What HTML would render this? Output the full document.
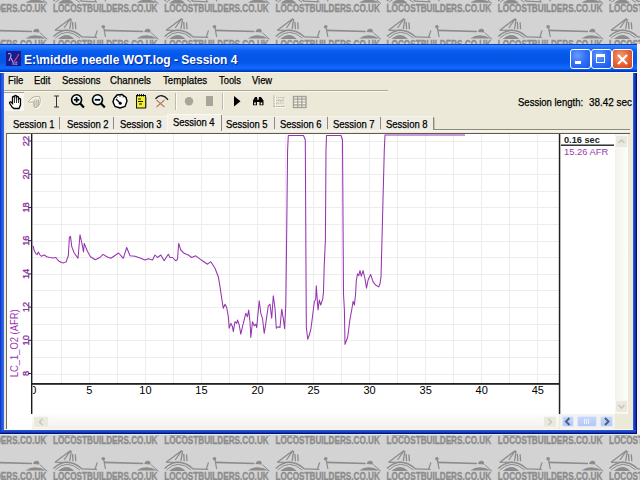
<!DOCTYPE html><html><head><meta charset="utf-8"><style>html,body{margin:0;padding:0;width:640px;height:480px;overflow:hidden;background:#d3d3d3}.a{position:absolute}</style></head><body><svg width="640" height="480" style="position:absolute;left:0;top:0"><rect width="640" height="480" fill="#d3d3d3"/><g transform="translate(-58.20,-31.20)"><text x="0" y="7.9" textLength="104.5" lengthAdjust="spacingAndGlyphs" font-family='"Liberation Sans"' font-weight="bold" font-size="10.8" fill="#8c8c8c" stroke="#8c8c8c" stroke-width="0.35">LOCOSTBUILDERS.CO.UK</text><path d="M2 25.9 L17.6 14.1 L11 23.6 M18.3 14.6 L16.7 24.8 M19.5 17.5 L20 24.8 M22.3 18 L22.8 24.8" fill="none" stroke="#8c8c8c" stroke-width="1.3"/><path d="M2 25.9 L15 25.9" fill="none" stroke="#8c8c8c" stroke-width="1.2"/><path d="M0.4 32.1 Q13.9 19.7 28.5 32.1" fill="none" stroke="#8c8c8c" stroke-width="1.4"/><path d="M2.2 33.6 Q13.9 22.2 26.8 33.6" fill="none" stroke="#8c8c8c" stroke-width="1.0"/><path d="M4.9 34.6 Q13.9 26.5 21.2 34.6 Z" fill="#8c8c8c"/><path d="M28 32.4 L44 33" fill="none" stroke="#8c8c8c" stroke-width="1.2"/><path d="M42.1 32.6 L44.3 26 M50.8 23.8 L52.5 32.6" fill="none" stroke="#8c8c8c" stroke-width="1.2"/><ellipse cx="50.3" cy="22.3" rx="1.8" ry="1.8" fill="#8c8c8c"/><path d="M51 26 L90.2 27.1" fill="none" stroke="#8c8c8c" stroke-width="1.6"/><path d="M91.3 27.5 Q92 24.2 95.5 24.4 Q98 25 97.4 28.2 Z" fill="#8c8c8c"/><path d="M83.7 34 Q92.4 27.5 104.5 34 Z" fill="#8c8c8c"/><path d="M97.9 28.2 L105.5 34.8" fill="none" stroke="#8c8c8c" stroke-width="1.0"/></g><g transform="translate(53.00,-31.20)"><text x="0" y="7.9" textLength="104.5" lengthAdjust="spacingAndGlyphs" font-family='"Liberation Sans"' font-weight="bold" font-size="10.8" fill="#8c8c8c" stroke="#8c8c8c" stroke-width="0.35">LOCOSTBUILDERS.CO.UK</text><path d="M2 25.9 L17.6 14.1 L11 23.6 M18.3 14.6 L16.7 24.8 M19.5 17.5 L20 24.8 M22.3 18 L22.8 24.8" fill="none" stroke="#8c8c8c" stroke-width="1.3"/><path d="M2 25.9 L15 25.9" fill="none" stroke="#8c8c8c" stroke-width="1.2"/><path d="M0.4 32.1 Q13.9 19.7 28.5 32.1" fill="none" stroke="#8c8c8c" stroke-width="1.4"/><path d="M2.2 33.6 Q13.9 22.2 26.8 33.6" fill="none" stroke="#8c8c8c" stroke-width="1.0"/><path d="M4.9 34.6 Q13.9 26.5 21.2 34.6 Z" fill="#8c8c8c"/><path d="M28 32.4 L44 33" fill="none" stroke="#8c8c8c" stroke-width="1.2"/><path d="M42.1 32.6 L44.3 26 M50.8 23.8 L52.5 32.6" fill="none" stroke="#8c8c8c" stroke-width="1.2"/><ellipse cx="50.3" cy="22.3" rx="1.8" ry="1.8" fill="#8c8c8c"/><path d="M51 26 L90.2 27.1" fill="none" stroke="#8c8c8c" stroke-width="1.6"/><path d="M91.3 27.5 Q92 24.2 95.5 24.4 Q98 25 97.4 28.2 Z" fill="#8c8c8c"/><path d="M83.7 34 Q92.4 27.5 104.5 34 Z" fill="#8c8c8c"/><path d="M97.9 28.2 L105.5 34.8" fill="none" stroke="#8c8c8c" stroke-width="1.0"/></g><g transform="translate(164.20,-31.20)"><text x="0" y="7.9" textLength="104.5" lengthAdjust="spacingAndGlyphs" font-family='"Liberation Sans"' font-weight="bold" font-size="10.8" fill="#8c8c8c" stroke="#8c8c8c" stroke-width="0.35">LOCOSTBUILDERS.CO.UK</text><path d="M2 25.9 L17.6 14.1 L11 23.6 M18.3 14.6 L16.7 24.8 M19.5 17.5 L20 24.8 M22.3 18 L22.8 24.8" fill="none" stroke="#8c8c8c" stroke-width="1.3"/><path d="M2 25.9 L15 25.9" fill="none" stroke="#8c8c8c" stroke-width="1.2"/><path d="M0.4 32.1 Q13.9 19.7 28.5 32.1" fill="none" stroke="#8c8c8c" stroke-width="1.4"/><path d="M2.2 33.6 Q13.9 22.2 26.8 33.6" fill="none" stroke="#8c8c8c" stroke-width="1.0"/><path d="M4.9 34.6 Q13.9 26.5 21.2 34.6 Z" fill="#8c8c8c"/><path d="M28 32.4 L44 33" fill="none" stroke="#8c8c8c" stroke-width="1.2"/><path d="M42.1 32.6 L44.3 26 M50.8 23.8 L52.5 32.6" fill="none" stroke="#8c8c8c" stroke-width="1.2"/><ellipse cx="50.3" cy="22.3" rx="1.8" ry="1.8" fill="#8c8c8c"/><path d="M51 26 L90.2 27.1" fill="none" stroke="#8c8c8c" stroke-width="1.6"/><path d="M91.3 27.5 Q92 24.2 95.5 24.4 Q98 25 97.4 28.2 Z" fill="#8c8c8c"/><path d="M83.7 34 Q92.4 27.5 104.5 34 Z" fill="#8c8c8c"/><path d="M97.9 28.2 L105.5 34.8" fill="none" stroke="#8c8c8c" stroke-width="1.0"/></g><g transform="translate(275.40,-31.20)"><text x="0" y="7.9" textLength="104.5" lengthAdjust="spacingAndGlyphs" font-family='"Liberation Sans"' font-weight="bold" font-size="10.8" fill="#8c8c8c" stroke="#8c8c8c" stroke-width="0.35">LOCOSTBUILDERS.CO.UK</text><path d="M2 25.9 L17.6 14.1 L11 23.6 M18.3 14.6 L16.7 24.8 M19.5 17.5 L20 24.8 M22.3 18 L22.8 24.8" fill="none" stroke="#8c8c8c" stroke-width="1.3"/><path d="M2 25.9 L15 25.9" fill="none" stroke="#8c8c8c" stroke-width="1.2"/><path d="M0.4 32.1 Q13.9 19.7 28.5 32.1" fill="none" stroke="#8c8c8c" stroke-width="1.4"/><path d="M2.2 33.6 Q13.9 22.2 26.8 33.6" fill="none" stroke="#8c8c8c" stroke-width="1.0"/><path d="M4.9 34.6 Q13.9 26.5 21.2 34.6 Z" fill="#8c8c8c"/><path d="M28 32.4 L44 33" fill="none" stroke="#8c8c8c" stroke-width="1.2"/><path d="M42.1 32.6 L44.3 26 M50.8 23.8 L52.5 32.6" fill="none" stroke="#8c8c8c" stroke-width="1.2"/><ellipse cx="50.3" cy="22.3" rx="1.8" ry="1.8" fill="#8c8c8c"/><path d="M51 26 L90.2 27.1" fill="none" stroke="#8c8c8c" stroke-width="1.6"/><path d="M91.3 27.5 Q92 24.2 95.5 24.4 Q98 25 97.4 28.2 Z" fill="#8c8c8c"/><path d="M83.7 34 Q92.4 27.5 104.5 34 Z" fill="#8c8c8c"/><path d="M97.9 28.2 L105.5 34.8" fill="none" stroke="#8c8c8c" stroke-width="1.0"/></g><g transform="translate(386.60,-31.20)"><text x="0" y="7.9" textLength="104.5" lengthAdjust="spacingAndGlyphs" font-family='"Liberation Sans"' font-weight="bold" font-size="10.8" fill="#8c8c8c" stroke="#8c8c8c" stroke-width="0.35">LOCOSTBUILDERS.CO.UK</text><path d="M2 25.9 L17.6 14.1 L11 23.6 M18.3 14.6 L16.7 24.8 M19.5 17.5 L20 24.8 M22.3 18 L22.8 24.8" fill="none" stroke="#8c8c8c" stroke-width="1.3"/><path d="M2 25.9 L15 25.9" fill="none" stroke="#8c8c8c" stroke-width="1.2"/><path d="M0.4 32.1 Q13.9 19.7 28.5 32.1" fill="none" stroke="#8c8c8c" stroke-width="1.4"/><path d="M2.2 33.6 Q13.9 22.2 26.8 33.6" fill="none" stroke="#8c8c8c" stroke-width="1.0"/><path d="M4.9 34.6 Q13.9 26.5 21.2 34.6 Z" fill="#8c8c8c"/><path d="M28 32.4 L44 33" fill="none" stroke="#8c8c8c" stroke-width="1.2"/><path d="M42.1 32.6 L44.3 26 M50.8 23.8 L52.5 32.6" fill="none" stroke="#8c8c8c" stroke-width="1.2"/><ellipse cx="50.3" cy="22.3" rx="1.8" ry="1.8" fill="#8c8c8c"/><path d="M51 26 L90.2 27.1" fill="none" stroke="#8c8c8c" stroke-width="1.6"/><path d="M91.3 27.5 Q92 24.2 95.5 24.4 Q98 25 97.4 28.2 Z" fill="#8c8c8c"/><path d="M83.7 34 Q92.4 27.5 104.5 34 Z" fill="#8c8c8c"/><path d="M97.9 28.2 L105.5 34.8" fill="none" stroke="#8c8c8c" stroke-width="1.0"/></g><g transform="translate(497.80,-31.20)"><text x="0" y="7.9" textLength="104.5" lengthAdjust="spacingAndGlyphs" font-family='"Liberation Sans"' font-weight="bold" font-size="10.8" fill="#8c8c8c" stroke="#8c8c8c" stroke-width="0.35">LOCOSTBUILDERS.CO.UK</text><path d="M2 25.9 L17.6 14.1 L11 23.6 M18.3 14.6 L16.7 24.8 M19.5 17.5 L20 24.8 M22.3 18 L22.8 24.8" fill="none" stroke="#8c8c8c" stroke-width="1.3"/><path d="M2 25.9 L15 25.9" fill="none" stroke="#8c8c8c" stroke-width="1.2"/><path d="M0.4 32.1 Q13.9 19.7 28.5 32.1" fill="none" stroke="#8c8c8c" stroke-width="1.4"/><path d="M2.2 33.6 Q13.9 22.2 26.8 33.6" fill="none" stroke="#8c8c8c" stroke-width="1.0"/><path d="M4.9 34.6 Q13.9 26.5 21.2 34.6 Z" fill="#8c8c8c"/><path d="M28 32.4 L44 33" fill="none" stroke="#8c8c8c" stroke-width="1.2"/><path d="M42.1 32.6 L44.3 26 M50.8 23.8 L52.5 32.6" fill="none" stroke="#8c8c8c" stroke-width="1.2"/><ellipse cx="50.3" cy="22.3" rx="1.8" ry="1.8" fill="#8c8c8c"/><path d="M51 26 L90.2 27.1" fill="none" stroke="#8c8c8c" stroke-width="1.6"/><path d="M91.3 27.5 Q92 24.2 95.5 24.4 Q98 25 97.4 28.2 Z" fill="#8c8c8c"/><path d="M83.7 34 Q92.4 27.5 104.5 34 Z" fill="#8c8c8c"/><path d="M97.9 28.2 L105.5 34.8" fill="none" stroke="#8c8c8c" stroke-width="1.0"/></g><g transform="translate(609.00,-31.20)"><text x="0" y="7.9" textLength="104.5" lengthAdjust="spacingAndGlyphs" font-family='"Liberation Sans"' font-weight="bold" font-size="10.8" fill="#8c8c8c" stroke="#8c8c8c" stroke-width="0.35">LOCOSTBUILDERS.CO.UK</text><path d="M2 25.9 L17.6 14.1 L11 23.6 M18.3 14.6 L16.7 24.8 M19.5 17.5 L20 24.8 M22.3 18 L22.8 24.8" fill="none" stroke="#8c8c8c" stroke-width="1.3"/><path d="M2 25.9 L15 25.9" fill="none" stroke="#8c8c8c" stroke-width="1.2"/><path d="M0.4 32.1 Q13.9 19.7 28.5 32.1" fill="none" stroke="#8c8c8c" stroke-width="1.4"/><path d="M2.2 33.6 Q13.9 22.2 26.8 33.6" fill="none" stroke="#8c8c8c" stroke-width="1.0"/><path d="M4.9 34.6 Q13.9 26.5 21.2 34.6 Z" fill="#8c8c8c"/><path d="M28 32.4 L44 33" fill="none" stroke="#8c8c8c" stroke-width="1.2"/><path d="M42.1 32.6 L44.3 26 M50.8 23.8 L52.5 32.6" fill="none" stroke="#8c8c8c" stroke-width="1.2"/><ellipse cx="50.3" cy="22.3" rx="1.8" ry="1.8" fill="#8c8c8c"/><path d="M51 26 L90.2 27.1" fill="none" stroke="#8c8c8c" stroke-width="1.6"/><path d="M91.3 27.5 Q92 24.2 95.5 24.4 Q98 25 97.4 28.2 Z" fill="#8c8c8c"/><path d="M83.7 34 Q92.4 27.5 104.5 34 Z" fill="#8c8c8c"/><path d="M97.9 28.2 L105.5 34.8" fill="none" stroke="#8c8c8c" stroke-width="1.0"/></g><g transform="translate(720.20,-31.20)"><text x="0" y="7.9" textLength="104.5" lengthAdjust="spacingAndGlyphs" font-family='"Liberation Sans"' font-weight="bold" font-size="10.8" fill="#8c8c8c" stroke="#8c8c8c" stroke-width="0.35">LOCOSTBUILDERS.CO.UK</text><path d="M2 25.9 L17.6 14.1 L11 23.6 M18.3 14.6 L16.7 24.8 M19.5 17.5 L20 24.8 M22.3 18 L22.8 24.8" fill="none" stroke="#8c8c8c" stroke-width="1.3"/><path d="M2 25.9 L15 25.9" fill="none" stroke="#8c8c8c" stroke-width="1.2"/><path d="M0.4 32.1 Q13.9 19.7 28.5 32.1" fill="none" stroke="#8c8c8c" stroke-width="1.4"/><path d="M2.2 33.6 Q13.9 22.2 26.8 33.6" fill="none" stroke="#8c8c8c" stroke-width="1.0"/><path d="M4.9 34.6 Q13.9 26.5 21.2 34.6 Z" fill="#8c8c8c"/><path d="M28 32.4 L44 33" fill="none" stroke="#8c8c8c" stroke-width="1.2"/><path d="M42.1 32.6 L44.3 26 M50.8 23.8 L52.5 32.6" fill="none" stroke="#8c8c8c" stroke-width="1.2"/><ellipse cx="50.3" cy="22.3" rx="1.8" ry="1.8" fill="#8c8c8c"/><path d="M51 26 L90.2 27.1" fill="none" stroke="#8c8c8c" stroke-width="1.6"/><path d="M91.3 27.5 Q92 24.2 95.5 24.4 Q98 25 97.4 28.2 Z" fill="#8c8c8c"/><path d="M83.7 34 Q92.4 27.5 104.5 34 Z" fill="#8c8c8c"/><path d="M97.9 28.2 L105.5 34.8" fill="none" stroke="#8c8c8c" stroke-width="1.0"/></g><g transform="translate(-58.20,4.40)"><text x="0" y="7.9" textLength="104.5" lengthAdjust="spacingAndGlyphs" font-family='"Liberation Sans"' font-weight="bold" font-size="10.8" fill="#8c8c8c" stroke="#8c8c8c" stroke-width="0.35">LOCOSTBUILDERS.CO.UK</text><path d="M2 25.9 L17.6 14.1 L11 23.6 M18.3 14.6 L16.7 24.8 M19.5 17.5 L20 24.8 M22.3 18 L22.8 24.8" fill="none" stroke="#8c8c8c" stroke-width="1.3"/><path d="M2 25.9 L15 25.9" fill="none" stroke="#8c8c8c" stroke-width="1.2"/><path d="M0.4 32.1 Q13.9 19.7 28.5 32.1" fill="none" stroke="#8c8c8c" stroke-width="1.4"/><path d="M2.2 33.6 Q13.9 22.2 26.8 33.6" fill="none" stroke="#8c8c8c" stroke-width="1.0"/><path d="M4.9 34.6 Q13.9 26.5 21.2 34.6 Z" fill="#8c8c8c"/><path d="M28 32.4 L44 33" fill="none" stroke="#8c8c8c" stroke-width="1.2"/><path d="M42.1 32.6 L44.3 26 M50.8 23.8 L52.5 32.6" fill="none" stroke="#8c8c8c" stroke-width="1.2"/><ellipse cx="50.3" cy="22.3" rx="1.8" ry="1.8" fill="#8c8c8c"/><path d="M51 26 L90.2 27.1" fill="none" stroke="#8c8c8c" stroke-width="1.6"/><path d="M91.3 27.5 Q92 24.2 95.5 24.4 Q98 25 97.4 28.2 Z" fill="#8c8c8c"/><path d="M83.7 34 Q92.4 27.5 104.5 34 Z" fill="#8c8c8c"/><path d="M97.9 28.2 L105.5 34.8" fill="none" stroke="#8c8c8c" stroke-width="1.0"/></g><g transform="translate(53.00,4.40)"><text x="0" y="7.9" textLength="104.5" lengthAdjust="spacingAndGlyphs" font-family='"Liberation Sans"' font-weight="bold" font-size="10.8" fill="#8c8c8c" stroke="#8c8c8c" stroke-width="0.35">LOCOSTBUILDERS.CO.UK</text><path d="M2 25.9 L17.6 14.1 L11 23.6 M18.3 14.6 L16.7 24.8 M19.5 17.5 L20 24.8 M22.3 18 L22.8 24.8" fill="none" stroke="#8c8c8c" stroke-width="1.3"/><path d="M2 25.9 L15 25.9" fill="none" stroke="#8c8c8c" stroke-width="1.2"/><path d="M0.4 32.1 Q13.9 19.7 28.5 32.1" fill="none" stroke="#8c8c8c" stroke-width="1.4"/><path d="M2.2 33.6 Q13.9 22.2 26.8 33.6" fill="none" stroke="#8c8c8c" stroke-width="1.0"/><path d="M4.9 34.6 Q13.9 26.5 21.2 34.6 Z" fill="#8c8c8c"/><path d="M28 32.4 L44 33" fill="none" stroke="#8c8c8c" stroke-width="1.2"/><path d="M42.1 32.6 L44.3 26 M50.8 23.8 L52.5 32.6" fill="none" stroke="#8c8c8c" stroke-width="1.2"/><ellipse cx="50.3" cy="22.3" rx="1.8" ry="1.8" fill="#8c8c8c"/><path d="M51 26 L90.2 27.1" fill="none" stroke="#8c8c8c" stroke-width="1.6"/><path d="M91.3 27.5 Q92 24.2 95.5 24.4 Q98 25 97.4 28.2 Z" fill="#8c8c8c"/><path d="M83.7 34 Q92.4 27.5 104.5 34 Z" fill="#8c8c8c"/><path d="M97.9 28.2 L105.5 34.8" fill="none" stroke="#8c8c8c" stroke-width="1.0"/></g><g transform="translate(164.20,4.40)"><text x="0" y="7.9" textLength="104.5" lengthAdjust="spacingAndGlyphs" font-family='"Liberation Sans"' font-weight="bold" font-size="10.8" fill="#8c8c8c" stroke="#8c8c8c" stroke-width="0.35">LOCOSTBUILDERS.CO.UK</text><path d="M2 25.9 L17.6 14.1 L11 23.6 M18.3 14.6 L16.7 24.8 M19.5 17.5 L20 24.8 M22.3 18 L22.8 24.8" fill="none" stroke="#8c8c8c" stroke-width="1.3"/><path d="M2 25.9 L15 25.9" fill="none" stroke="#8c8c8c" stroke-width="1.2"/><path d="M0.4 32.1 Q13.9 19.7 28.5 32.1" fill="none" stroke="#8c8c8c" stroke-width="1.4"/><path d="M2.2 33.6 Q13.9 22.2 26.8 33.6" fill="none" stroke="#8c8c8c" stroke-width="1.0"/><path d="M4.9 34.6 Q13.9 26.5 21.2 34.6 Z" fill="#8c8c8c"/><path d="M28 32.4 L44 33" fill="none" stroke="#8c8c8c" stroke-width="1.2"/><path d="M42.1 32.6 L44.3 26 M50.8 23.8 L52.5 32.6" fill="none" stroke="#8c8c8c" stroke-width="1.2"/><ellipse cx="50.3" cy="22.3" rx="1.8" ry="1.8" fill="#8c8c8c"/><path d="M51 26 L90.2 27.1" fill="none" stroke="#8c8c8c" stroke-width="1.6"/><path d="M91.3 27.5 Q92 24.2 95.5 24.4 Q98 25 97.4 28.2 Z" fill="#8c8c8c"/><path d="M83.7 34 Q92.4 27.5 104.5 34 Z" fill="#8c8c8c"/><path d="M97.9 28.2 L105.5 34.8" fill="none" stroke="#8c8c8c" stroke-width="1.0"/></g><g transform="translate(275.40,4.40)"><text x="0" y="7.9" textLength="104.5" lengthAdjust="spacingAndGlyphs" font-family='"Liberation Sans"' font-weight="bold" font-size="10.8" fill="#8c8c8c" stroke="#8c8c8c" stroke-width="0.35">LOCOSTBUILDERS.CO.UK</text><path d="M2 25.9 L17.6 14.1 L11 23.6 M18.3 14.6 L16.7 24.8 M19.5 17.5 L20 24.8 M22.3 18 L22.8 24.8" fill="none" stroke="#8c8c8c" stroke-width="1.3"/><path d="M2 25.9 L15 25.9" fill="none" stroke="#8c8c8c" stroke-width="1.2"/><path d="M0.4 32.1 Q13.9 19.7 28.5 32.1" fill="none" stroke="#8c8c8c" stroke-width="1.4"/><path d="M2.2 33.6 Q13.9 22.2 26.8 33.6" fill="none" stroke="#8c8c8c" stroke-width="1.0"/><path d="M4.9 34.6 Q13.9 26.5 21.2 34.6 Z" fill="#8c8c8c"/><path d="M28 32.4 L44 33" fill="none" stroke="#8c8c8c" stroke-width="1.2"/><path d="M42.1 32.6 L44.3 26 M50.8 23.8 L52.5 32.6" fill="none" stroke="#8c8c8c" stroke-width="1.2"/><ellipse cx="50.3" cy="22.3" rx="1.8" ry="1.8" fill="#8c8c8c"/><path d="M51 26 L90.2 27.1" fill="none" stroke="#8c8c8c" stroke-width="1.6"/><path d="M91.3 27.5 Q92 24.2 95.5 24.4 Q98 25 97.4 28.2 Z" fill="#8c8c8c"/><path d="M83.7 34 Q92.4 27.5 104.5 34 Z" fill="#8c8c8c"/><path d="M97.9 28.2 L105.5 34.8" fill="none" stroke="#8c8c8c" stroke-width="1.0"/></g><g transform="translate(386.60,4.40)"><text x="0" y="7.9" textLength="104.5" lengthAdjust="spacingAndGlyphs" font-family='"Liberation Sans"' font-weight="bold" font-size="10.8" fill="#8c8c8c" stroke="#8c8c8c" stroke-width="0.35">LOCOSTBUILDERS.CO.UK</text><path d="M2 25.9 L17.6 14.1 L11 23.6 M18.3 14.6 L16.7 24.8 M19.5 17.5 L20 24.8 M22.3 18 L22.8 24.8" fill="none" stroke="#8c8c8c" stroke-width="1.3"/><path d="M2 25.9 L15 25.9" fill="none" stroke="#8c8c8c" stroke-width="1.2"/><path d="M0.4 32.1 Q13.9 19.7 28.5 32.1" fill="none" stroke="#8c8c8c" stroke-width="1.4"/><path d="M2.2 33.6 Q13.9 22.2 26.8 33.6" fill="none" stroke="#8c8c8c" stroke-width="1.0"/><path d="M4.9 34.6 Q13.9 26.5 21.2 34.6 Z" fill="#8c8c8c"/><path d="M28 32.4 L44 33" fill="none" stroke="#8c8c8c" stroke-width="1.2"/><path d="M42.1 32.6 L44.3 26 M50.8 23.8 L52.5 32.6" fill="none" stroke="#8c8c8c" stroke-width="1.2"/><ellipse cx="50.3" cy="22.3" rx="1.8" ry="1.8" fill="#8c8c8c"/><path d="M51 26 L90.2 27.1" fill="none" stroke="#8c8c8c" stroke-width="1.6"/><path d="M91.3 27.5 Q92 24.2 95.5 24.4 Q98 25 97.4 28.2 Z" fill="#8c8c8c"/><path d="M83.7 34 Q92.4 27.5 104.5 34 Z" fill="#8c8c8c"/><path d="M97.9 28.2 L105.5 34.8" fill="none" stroke="#8c8c8c" stroke-width="1.0"/></g><g transform="translate(497.80,4.40)"><text x="0" y="7.9" textLength="104.5" lengthAdjust="spacingAndGlyphs" font-family='"Liberation Sans"' font-weight="bold" font-size="10.8" fill="#8c8c8c" stroke="#8c8c8c" stroke-width="0.35">LOCOSTBUILDERS.CO.UK</text><path d="M2 25.9 L17.6 14.1 L11 23.6 M18.3 14.6 L16.7 24.8 M19.5 17.5 L20 24.8 M22.3 18 L22.8 24.8" fill="none" stroke="#8c8c8c" stroke-width="1.3"/><path d="M2 25.9 L15 25.9" fill="none" stroke="#8c8c8c" stroke-width="1.2"/><path d="M0.4 32.1 Q13.9 19.7 28.5 32.1" fill="none" stroke="#8c8c8c" stroke-width="1.4"/><path d="M2.2 33.6 Q13.9 22.2 26.8 33.6" fill="none" stroke="#8c8c8c" stroke-width="1.0"/><path d="M4.9 34.6 Q13.9 26.5 21.2 34.6 Z" fill="#8c8c8c"/><path d="M28 32.4 L44 33" fill="none" stroke="#8c8c8c" stroke-width="1.2"/><path d="M42.1 32.6 L44.3 26 M50.8 23.8 L52.5 32.6" fill="none" stroke="#8c8c8c" stroke-width="1.2"/><ellipse cx="50.3" cy="22.3" rx="1.8" ry="1.8" fill="#8c8c8c"/><path d="M51 26 L90.2 27.1" fill="none" stroke="#8c8c8c" stroke-width="1.6"/><path d="M91.3 27.5 Q92 24.2 95.5 24.4 Q98 25 97.4 28.2 Z" fill="#8c8c8c"/><path d="M83.7 34 Q92.4 27.5 104.5 34 Z" fill="#8c8c8c"/><path d="M97.9 28.2 L105.5 34.8" fill="none" stroke="#8c8c8c" stroke-width="1.0"/></g><g transform="translate(609.00,4.40)"><text x="0" y="7.9" textLength="104.5" lengthAdjust="spacingAndGlyphs" font-family='"Liberation Sans"' font-weight="bold" font-size="10.8" fill="#8c8c8c" stroke="#8c8c8c" stroke-width="0.35">LOCOSTBUILDERS.CO.UK</text><path d="M2 25.9 L17.6 14.1 L11 23.6 M18.3 14.6 L16.7 24.8 M19.5 17.5 L20 24.8 M22.3 18 L22.8 24.8" fill="none" stroke="#8c8c8c" stroke-width="1.3"/><path d="M2 25.9 L15 25.9" fill="none" stroke="#8c8c8c" stroke-width="1.2"/><path d="M0.4 32.1 Q13.9 19.7 28.5 32.1" fill="none" stroke="#8c8c8c" stroke-width="1.4"/><path d="M2.2 33.6 Q13.9 22.2 26.8 33.6" fill="none" stroke="#8c8c8c" stroke-width="1.0"/><path d="M4.9 34.6 Q13.9 26.5 21.2 34.6 Z" fill="#8c8c8c"/><path d="M28 32.4 L44 33" fill="none" stroke="#8c8c8c" stroke-width="1.2"/><path d="M42.1 32.6 L44.3 26 M50.8 23.8 L52.5 32.6" fill="none" stroke="#8c8c8c" stroke-width="1.2"/><ellipse cx="50.3" cy="22.3" rx="1.8" ry="1.8" fill="#8c8c8c"/><path d="M51 26 L90.2 27.1" fill="none" stroke="#8c8c8c" stroke-width="1.6"/><path d="M91.3 27.5 Q92 24.2 95.5 24.4 Q98 25 97.4 28.2 Z" fill="#8c8c8c"/><path d="M83.7 34 Q92.4 27.5 104.5 34 Z" fill="#8c8c8c"/><path d="M97.9 28.2 L105.5 34.8" fill="none" stroke="#8c8c8c" stroke-width="1.0"/></g><g transform="translate(720.20,4.40)"><text x="0" y="7.9" textLength="104.5" lengthAdjust="spacingAndGlyphs" font-family='"Liberation Sans"' font-weight="bold" font-size="10.8" fill="#8c8c8c" stroke="#8c8c8c" stroke-width="0.35">LOCOSTBUILDERS.CO.UK</text><path d="M2 25.9 L17.6 14.1 L11 23.6 M18.3 14.6 L16.7 24.8 M19.5 17.5 L20 24.8 M22.3 18 L22.8 24.8" fill="none" stroke="#8c8c8c" stroke-width="1.3"/><path d="M2 25.9 L15 25.9" fill="none" stroke="#8c8c8c" stroke-width="1.2"/><path d="M0.4 32.1 Q13.9 19.7 28.5 32.1" fill="none" stroke="#8c8c8c" stroke-width="1.4"/><path d="M2.2 33.6 Q13.9 22.2 26.8 33.6" fill="none" stroke="#8c8c8c" stroke-width="1.0"/><path d="M4.9 34.6 Q13.9 26.5 21.2 34.6 Z" fill="#8c8c8c"/><path d="M28 32.4 L44 33" fill="none" stroke="#8c8c8c" stroke-width="1.2"/><path d="M42.1 32.6 L44.3 26 M50.8 23.8 L52.5 32.6" fill="none" stroke="#8c8c8c" stroke-width="1.2"/><ellipse cx="50.3" cy="22.3" rx="1.8" ry="1.8" fill="#8c8c8c"/><path d="M51 26 L90.2 27.1" fill="none" stroke="#8c8c8c" stroke-width="1.6"/><path d="M91.3 27.5 Q92 24.2 95.5 24.4 Q98 25 97.4 28.2 Z" fill="#8c8c8c"/><path d="M83.7 34 Q92.4 27.5 104.5 34 Z" fill="#8c8c8c"/><path d="M97.9 28.2 L105.5 34.8" fill="none" stroke="#8c8c8c" stroke-width="1.0"/></g><g transform="translate(-58.20,40.00)"><text x="0" y="7.9" textLength="104.5" lengthAdjust="spacingAndGlyphs" font-family='"Liberation Sans"' font-weight="bold" font-size="10.8" fill="#8c8c8c" stroke="#8c8c8c" stroke-width="0.35">LOCOSTBUILDERS.CO.UK</text><path d="M2 25.9 L17.6 14.1 L11 23.6 M18.3 14.6 L16.7 24.8 M19.5 17.5 L20 24.8 M22.3 18 L22.8 24.8" fill="none" stroke="#8c8c8c" stroke-width="1.3"/><path d="M2 25.9 L15 25.9" fill="none" stroke="#8c8c8c" stroke-width="1.2"/><path d="M0.4 32.1 Q13.9 19.7 28.5 32.1" fill="none" stroke="#8c8c8c" stroke-width="1.4"/><path d="M2.2 33.6 Q13.9 22.2 26.8 33.6" fill="none" stroke="#8c8c8c" stroke-width="1.0"/><path d="M4.9 34.6 Q13.9 26.5 21.2 34.6 Z" fill="#8c8c8c"/><path d="M28 32.4 L44 33" fill="none" stroke="#8c8c8c" stroke-width="1.2"/><path d="M42.1 32.6 L44.3 26 M50.8 23.8 L52.5 32.6" fill="none" stroke="#8c8c8c" stroke-width="1.2"/><ellipse cx="50.3" cy="22.3" rx="1.8" ry="1.8" fill="#8c8c8c"/><path d="M51 26 L90.2 27.1" fill="none" stroke="#8c8c8c" stroke-width="1.6"/><path d="M91.3 27.5 Q92 24.2 95.5 24.4 Q98 25 97.4 28.2 Z" fill="#8c8c8c"/><path d="M83.7 34 Q92.4 27.5 104.5 34 Z" fill="#8c8c8c"/><path d="M97.9 28.2 L105.5 34.8" fill="none" stroke="#8c8c8c" stroke-width="1.0"/></g><g transform="translate(53.00,40.00)"><text x="0" y="7.9" textLength="104.5" lengthAdjust="spacingAndGlyphs" font-family='"Liberation Sans"' font-weight="bold" font-size="10.8" fill="#8c8c8c" stroke="#8c8c8c" stroke-width="0.35">LOCOSTBUILDERS.CO.UK</text><path d="M2 25.9 L17.6 14.1 L11 23.6 M18.3 14.6 L16.7 24.8 M19.5 17.5 L20 24.8 M22.3 18 L22.8 24.8" fill="none" stroke="#8c8c8c" stroke-width="1.3"/><path d="M2 25.9 L15 25.9" fill="none" stroke="#8c8c8c" stroke-width="1.2"/><path d="M0.4 32.1 Q13.9 19.7 28.5 32.1" fill="none" stroke="#8c8c8c" stroke-width="1.4"/><path d="M2.2 33.6 Q13.9 22.2 26.8 33.6" fill="none" stroke="#8c8c8c" stroke-width="1.0"/><path d="M4.9 34.6 Q13.9 26.5 21.2 34.6 Z" fill="#8c8c8c"/><path d="M28 32.4 L44 33" fill="none" stroke="#8c8c8c" stroke-width="1.2"/><path d="M42.1 32.6 L44.3 26 M50.8 23.8 L52.5 32.6" fill="none" stroke="#8c8c8c" stroke-width="1.2"/><ellipse cx="50.3" cy="22.3" rx="1.8" ry="1.8" fill="#8c8c8c"/><path d="M51 26 L90.2 27.1" fill="none" stroke="#8c8c8c" stroke-width="1.6"/><path d="M91.3 27.5 Q92 24.2 95.5 24.4 Q98 25 97.4 28.2 Z" fill="#8c8c8c"/><path d="M83.7 34 Q92.4 27.5 104.5 34 Z" fill="#8c8c8c"/><path d="M97.9 28.2 L105.5 34.8" fill="none" stroke="#8c8c8c" stroke-width="1.0"/></g><g transform="translate(164.20,40.00)"><text x="0" y="7.9" textLength="104.5" lengthAdjust="spacingAndGlyphs" font-family='"Liberation Sans"' font-weight="bold" font-size="10.8" fill="#8c8c8c" stroke="#8c8c8c" stroke-width="0.35">LOCOSTBUILDERS.CO.UK</text><path d="M2 25.9 L17.6 14.1 L11 23.6 M18.3 14.6 L16.7 24.8 M19.5 17.5 L20 24.8 M22.3 18 L22.8 24.8" fill="none" stroke="#8c8c8c" stroke-width="1.3"/><path d="M2 25.9 L15 25.9" fill="none" stroke="#8c8c8c" stroke-width="1.2"/><path d="M0.4 32.1 Q13.9 19.7 28.5 32.1" fill="none" stroke="#8c8c8c" stroke-width="1.4"/><path d="M2.2 33.6 Q13.9 22.2 26.8 33.6" fill="none" stroke="#8c8c8c" stroke-width="1.0"/><path d="M4.9 34.6 Q13.9 26.5 21.2 34.6 Z" fill="#8c8c8c"/><path d="M28 32.4 L44 33" fill="none" stroke="#8c8c8c" stroke-width="1.2"/><path d="M42.1 32.6 L44.3 26 M50.8 23.8 L52.5 32.6" fill="none" stroke="#8c8c8c" stroke-width="1.2"/><ellipse cx="50.3" cy="22.3" rx="1.8" ry="1.8" fill="#8c8c8c"/><path d="M51 26 L90.2 27.1" fill="none" stroke="#8c8c8c" stroke-width="1.6"/><path d="M91.3 27.5 Q92 24.2 95.5 24.4 Q98 25 97.4 28.2 Z" fill="#8c8c8c"/><path d="M83.7 34 Q92.4 27.5 104.5 34 Z" fill="#8c8c8c"/><path d="M97.9 28.2 L105.5 34.8" fill="none" stroke="#8c8c8c" stroke-width="1.0"/></g><g transform="translate(275.40,40.00)"><text x="0" y="7.9" textLength="104.5" lengthAdjust="spacingAndGlyphs" font-family='"Liberation Sans"' font-weight="bold" font-size="10.8" fill="#8c8c8c" stroke="#8c8c8c" stroke-width="0.35">LOCOSTBUILDERS.CO.UK</text><path d="M2 25.9 L17.6 14.1 L11 23.6 M18.3 14.6 L16.7 24.8 M19.5 17.5 L20 24.8 M22.3 18 L22.8 24.8" fill="none" stroke="#8c8c8c" stroke-width="1.3"/><path d="M2 25.9 L15 25.9" fill="none" stroke="#8c8c8c" stroke-width="1.2"/><path d="M0.4 32.1 Q13.9 19.7 28.5 32.1" fill="none" stroke="#8c8c8c" stroke-width="1.4"/><path d="M2.2 33.6 Q13.9 22.2 26.8 33.6" fill="none" stroke="#8c8c8c" stroke-width="1.0"/><path d="M4.9 34.6 Q13.9 26.5 21.2 34.6 Z" fill="#8c8c8c"/><path d="M28 32.4 L44 33" fill="none" stroke="#8c8c8c" stroke-width="1.2"/><path d="M42.1 32.6 L44.3 26 M50.8 23.8 L52.5 32.6" fill="none" stroke="#8c8c8c" stroke-width="1.2"/><ellipse cx="50.3" cy="22.3" rx="1.8" ry="1.8" fill="#8c8c8c"/><path d="M51 26 L90.2 27.1" fill="none" stroke="#8c8c8c" stroke-width="1.6"/><path d="M91.3 27.5 Q92 24.2 95.5 24.4 Q98 25 97.4 28.2 Z" fill="#8c8c8c"/><path d="M83.7 34 Q92.4 27.5 104.5 34 Z" fill="#8c8c8c"/><path d="M97.9 28.2 L105.5 34.8" fill="none" stroke="#8c8c8c" stroke-width="1.0"/></g><g transform="translate(386.60,40.00)"><text x="0" y="7.9" textLength="104.5" lengthAdjust="spacingAndGlyphs" font-family='"Liberation Sans"' font-weight="bold" font-size="10.8" fill="#8c8c8c" stroke="#8c8c8c" stroke-width="0.35">LOCOSTBUILDERS.CO.UK</text><path d="M2 25.9 L17.6 14.1 L11 23.6 M18.3 14.6 L16.7 24.8 M19.5 17.5 L20 24.8 M22.3 18 L22.8 24.8" fill="none" stroke="#8c8c8c" stroke-width="1.3"/><path d="M2 25.9 L15 25.9" fill="none" stroke="#8c8c8c" stroke-width="1.2"/><path d="M0.4 32.1 Q13.9 19.7 28.5 32.1" fill="none" stroke="#8c8c8c" stroke-width="1.4"/><path d="M2.2 33.6 Q13.9 22.2 26.8 33.6" fill="none" stroke="#8c8c8c" stroke-width="1.0"/><path d="M4.9 34.6 Q13.9 26.5 21.2 34.6 Z" fill="#8c8c8c"/><path d="M28 32.4 L44 33" fill="none" stroke="#8c8c8c" stroke-width="1.2"/><path d="M42.1 32.6 L44.3 26 M50.8 23.8 L52.5 32.6" fill="none" stroke="#8c8c8c" stroke-width="1.2"/><ellipse cx="50.3" cy="22.3" rx="1.8" ry="1.8" fill="#8c8c8c"/><path d="M51 26 L90.2 27.1" fill="none" stroke="#8c8c8c" stroke-width="1.6"/><path d="M91.3 27.5 Q92 24.2 95.5 24.4 Q98 25 97.4 28.2 Z" fill="#8c8c8c"/><path d="M83.7 34 Q92.4 27.5 104.5 34 Z" fill="#8c8c8c"/><path d="M97.9 28.2 L105.5 34.8" fill="none" stroke="#8c8c8c" stroke-width="1.0"/></g><g transform="translate(497.80,40.00)"><text x="0" y="7.9" textLength="104.5" lengthAdjust="spacingAndGlyphs" font-family='"Liberation Sans"' font-weight="bold" font-size="10.8" fill="#8c8c8c" stroke="#8c8c8c" stroke-width="0.35">LOCOSTBUILDERS.CO.UK</text><path d="M2 25.9 L17.6 14.1 L11 23.6 M18.3 14.6 L16.7 24.8 M19.5 17.5 L20 24.8 M22.3 18 L22.8 24.8" fill="none" stroke="#8c8c8c" stroke-width="1.3"/><path d="M2 25.9 L15 25.9" fill="none" stroke="#8c8c8c" stroke-width="1.2"/><path d="M0.4 32.1 Q13.9 19.7 28.5 32.1" fill="none" stroke="#8c8c8c" stroke-width="1.4"/><path d="M2.2 33.6 Q13.9 22.2 26.8 33.6" fill="none" stroke="#8c8c8c" stroke-width="1.0"/><path d="M4.9 34.6 Q13.9 26.5 21.2 34.6 Z" fill="#8c8c8c"/><path d="M28 32.4 L44 33" fill="none" stroke="#8c8c8c" stroke-width="1.2"/><path d="M42.1 32.6 L44.3 26 M50.8 23.8 L52.5 32.6" fill="none" stroke="#8c8c8c" stroke-width="1.2"/><ellipse cx="50.3" cy="22.3" rx="1.8" ry="1.8" fill="#8c8c8c"/><path d="M51 26 L90.2 27.1" fill="none" stroke="#8c8c8c" stroke-width="1.6"/><path d="M91.3 27.5 Q92 24.2 95.5 24.4 Q98 25 97.4 28.2 Z" fill="#8c8c8c"/><path d="M83.7 34 Q92.4 27.5 104.5 34 Z" fill="#8c8c8c"/><path d="M97.9 28.2 L105.5 34.8" fill="none" stroke="#8c8c8c" stroke-width="1.0"/></g><g transform="translate(609.00,40.00)"><text x="0" y="7.9" textLength="104.5" lengthAdjust="spacingAndGlyphs" font-family='"Liberation Sans"' font-weight="bold" font-size="10.8" fill="#8c8c8c" stroke="#8c8c8c" stroke-width="0.35">LOCOSTBUILDERS.CO.UK</text><path d="M2 25.9 L17.6 14.1 L11 23.6 M18.3 14.6 L16.7 24.8 M19.5 17.5 L20 24.8 M22.3 18 L22.8 24.8" fill="none" stroke="#8c8c8c" stroke-width="1.3"/><path d="M2 25.9 L15 25.9" fill="none" stroke="#8c8c8c" stroke-width="1.2"/><path d="M0.4 32.1 Q13.9 19.7 28.5 32.1" fill="none" stroke="#8c8c8c" stroke-width="1.4"/><path d="M2.2 33.6 Q13.9 22.2 26.8 33.6" fill="none" stroke="#8c8c8c" stroke-width="1.0"/><path d="M4.9 34.6 Q13.9 26.5 21.2 34.6 Z" fill="#8c8c8c"/><path d="M28 32.4 L44 33" fill="none" stroke="#8c8c8c" stroke-width="1.2"/><path d="M42.1 32.6 L44.3 26 M50.8 23.8 L52.5 32.6" fill="none" stroke="#8c8c8c" stroke-width="1.2"/><ellipse cx="50.3" cy="22.3" rx="1.8" ry="1.8" fill="#8c8c8c"/><path d="M51 26 L90.2 27.1" fill="none" stroke="#8c8c8c" stroke-width="1.6"/><path d="M91.3 27.5 Q92 24.2 95.5 24.4 Q98 25 97.4 28.2 Z" fill="#8c8c8c"/><path d="M83.7 34 Q92.4 27.5 104.5 34 Z" fill="#8c8c8c"/><path d="M97.9 28.2 L105.5 34.8" fill="none" stroke="#8c8c8c" stroke-width="1.0"/></g><g transform="translate(720.20,40.00)"><text x="0" y="7.9" textLength="104.5" lengthAdjust="spacingAndGlyphs" font-family='"Liberation Sans"' font-weight="bold" font-size="10.8" fill="#8c8c8c" stroke="#8c8c8c" stroke-width="0.35">LOCOSTBUILDERS.CO.UK</text><path d="M2 25.9 L17.6 14.1 L11 23.6 M18.3 14.6 L16.7 24.8 M19.5 17.5 L20 24.8 M22.3 18 L22.8 24.8" fill="none" stroke="#8c8c8c" stroke-width="1.3"/><path d="M2 25.9 L15 25.9" fill="none" stroke="#8c8c8c" stroke-width="1.2"/><path d="M0.4 32.1 Q13.9 19.7 28.5 32.1" fill="none" stroke="#8c8c8c" stroke-width="1.4"/><path d="M2.2 33.6 Q13.9 22.2 26.8 33.6" fill="none" stroke="#8c8c8c" stroke-width="1.0"/><path d="M4.9 34.6 Q13.9 26.5 21.2 34.6 Z" fill="#8c8c8c"/><path d="M28 32.4 L44 33" fill="none" stroke="#8c8c8c" stroke-width="1.2"/><path d="M42.1 32.6 L44.3 26 M50.8 23.8 L52.5 32.6" fill="none" stroke="#8c8c8c" stroke-width="1.2"/><ellipse cx="50.3" cy="22.3" rx="1.8" ry="1.8" fill="#8c8c8c"/><path d="M51 26 L90.2 27.1" fill="none" stroke="#8c8c8c" stroke-width="1.6"/><path d="M91.3 27.5 Q92 24.2 95.5 24.4 Q98 25 97.4 28.2 Z" fill="#8c8c8c"/><path d="M83.7 34 Q92.4 27.5 104.5 34 Z" fill="#8c8c8c"/><path d="M97.9 28.2 L105.5 34.8" fill="none" stroke="#8c8c8c" stroke-width="1.0"/></g><g transform="translate(-58.20,400.80)"><text x="0" y="7.9" textLength="104.5" lengthAdjust="spacingAndGlyphs" font-family='"Liberation Sans"' font-weight="bold" font-size="10.8" fill="#8c8c8c" stroke="#8c8c8c" stroke-width="0.35">LOCOSTBUILDERS.CO.UK</text><path d="M2 25.9 L17.6 14.1 L11 23.6 M18.3 14.6 L16.7 24.8 M19.5 17.5 L20 24.8 M22.3 18 L22.8 24.8" fill="none" stroke="#8c8c8c" stroke-width="1.3"/><path d="M2 25.9 L15 25.9" fill="none" stroke="#8c8c8c" stroke-width="1.2"/><path d="M0.4 32.1 Q13.9 19.7 28.5 32.1" fill="none" stroke="#8c8c8c" stroke-width="1.4"/><path d="M2.2 33.6 Q13.9 22.2 26.8 33.6" fill="none" stroke="#8c8c8c" stroke-width="1.0"/><path d="M4.9 34.6 Q13.9 26.5 21.2 34.6 Z" fill="#8c8c8c"/><path d="M28 32.4 L44 33" fill="none" stroke="#8c8c8c" stroke-width="1.2"/><path d="M42.1 32.6 L44.3 26 M50.8 23.8 L52.5 32.6" fill="none" stroke="#8c8c8c" stroke-width="1.2"/><ellipse cx="50.3" cy="22.3" rx="1.8" ry="1.8" fill="#8c8c8c"/><path d="M51 26 L90.2 27.1" fill="none" stroke="#8c8c8c" stroke-width="1.6"/><path d="M91.3 27.5 Q92 24.2 95.5 24.4 Q98 25 97.4 28.2 Z" fill="#8c8c8c"/><path d="M83.7 34 Q92.4 27.5 104.5 34 Z" fill="#8c8c8c"/><path d="M97.9 28.2 L105.5 34.8" fill="none" stroke="#8c8c8c" stroke-width="1.0"/></g><g transform="translate(53.00,400.80)"><text x="0" y="7.9" textLength="104.5" lengthAdjust="spacingAndGlyphs" font-family='"Liberation Sans"' font-weight="bold" font-size="10.8" fill="#8c8c8c" stroke="#8c8c8c" stroke-width="0.35">LOCOSTBUILDERS.CO.UK</text><path d="M2 25.9 L17.6 14.1 L11 23.6 M18.3 14.6 L16.7 24.8 M19.5 17.5 L20 24.8 M22.3 18 L22.8 24.8" fill="none" stroke="#8c8c8c" stroke-width="1.3"/><path d="M2 25.9 L15 25.9" fill="none" stroke="#8c8c8c" stroke-width="1.2"/><path d="M0.4 32.1 Q13.9 19.7 28.5 32.1" fill="none" stroke="#8c8c8c" stroke-width="1.4"/><path d="M2.2 33.6 Q13.9 22.2 26.8 33.6" fill="none" stroke="#8c8c8c" stroke-width="1.0"/><path d="M4.9 34.6 Q13.9 26.5 21.2 34.6 Z" fill="#8c8c8c"/><path d="M28 32.4 L44 33" fill="none" stroke="#8c8c8c" stroke-width="1.2"/><path d="M42.1 32.6 L44.3 26 M50.8 23.8 L52.5 32.6" fill="none" stroke="#8c8c8c" stroke-width="1.2"/><ellipse cx="50.3" cy="22.3" rx="1.8" ry="1.8" fill="#8c8c8c"/><path d="M51 26 L90.2 27.1" fill="none" stroke="#8c8c8c" stroke-width="1.6"/><path d="M91.3 27.5 Q92 24.2 95.5 24.4 Q98 25 97.4 28.2 Z" fill="#8c8c8c"/><path d="M83.7 34 Q92.4 27.5 104.5 34 Z" fill="#8c8c8c"/><path d="M97.9 28.2 L105.5 34.8" fill="none" stroke="#8c8c8c" stroke-width="1.0"/></g><g transform="translate(164.20,400.80)"><text x="0" y="7.9" textLength="104.5" lengthAdjust="spacingAndGlyphs" font-family='"Liberation Sans"' font-weight="bold" font-size="10.8" fill="#8c8c8c" stroke="#8c8c8c" stroke-width="0.35">LOCOSTBUILDERS.CO.UK</text><path d="M2 25.9 L17.6 14.1 L11 23.6 M18.3 14.6 L16.7 24.8 M19.5 17.5 L20 24.8 M22.3 18 L22.8 24.8" fill="none" stroke="#8c8c8c" stroke-width="1.3"/><path d="M2 25.9 L15 25.9" fill="none" stroke="#8c8c8c" stroke-width="1.2"/><path d="M0.4 32.1 Q13.9 19.7 28.5 32.1" fill="none" stroke="#8c8c8c" stroke-width="1.4"/><path d="M2.2 33.6 Q13.9 22.2 26.8 33.6" fill="none" stroke="#8c8c8c" stroke-width="1.0"/><path d="M4.9 34.6 Q13.9 26.5 21.2 34.6 Z" fill="#8c8c8c"/><path d="M28 32.4 L44 33" fill="none" stroke="#8c8c8c" stroke-width="1.2"/><path d="M42.1 32.6 L44.3 26 M50.8 23.8 L52.5 32.6" fill="none" stroke="#8c8c8c" stroke-width="1.2"/><ellipse cx="50.3" cy="22.3" rx="1.8" ry="1.8" fill="#8c8c8c"/><path d="M51 26 L90.2 27.1" fill="none" stroke="#8c8c8c" stroke-width="1.6"/><path d="M91.3 27.5 Q92 24.2 95.5 24.4 Q98 25 97.4 28.2 Z" fill="#8c8c8c"/><path d="M83.7 34 Q92.4 27.5 104.5 34 Z" fill="#8c8c8c"/><path d="M97.9 28.2 L105.5 34.8" fill="none" stroke="#8c8c8c" stroke-width="1.0"/></g><g transform="translate(275.40,400.80)"><text x="0" y="7.9" textLength="104.5" lengthAdjust="spacingAndGlyphs" font-family='"Liberation Sans"' font-weight="bold" font-size="10.8" fill="#8c8c8c" stroke="#8c8c8c" stroke-width="0.35">LOCOSTBUILDERS.CO.UK</text><path d="M2 25.9 L17.6 14.1 L11 23.6 M18.3 14.6 L16.7 24.8 M19.5 17.5 L20 24.8 M22.3 18 L22.8 24.8" fill="none" stroke="#8c8c8c" stroke-width="1.3"/><path d="M2 25.9 L15 25.9" fill="none" stroke="#8c8c8c" stroke-width="1.2"/><path d="M0.4 32.1 Q13.9 19.7 28.5 32.1" fill="none" stroke="#8c8c8c" stroke-width="1.4"/><path d="M2.2 33.6 Q13.9 22.2 26.8 33.6" fill="none" stroke="#8c8c8c" stroke-width="1.0"/><path d="M4.9 34.6 Q13.9 26.5 21.2 34.6 Z" fill="#8c8c8c"/><path d="M28 32.4 L44 33" fill="none" stroke="#8c8c8c" stroke-width="1.2"/><path d="M42.1 32.6 L44.3 26 M50.8 23.8 L52.5 32.6" fill="none" stroke="#8c8c8c" stroke-width="1.2"/><ellipse cx="50.3" cy="22.3" rx="1.8" ry="1.8" fill="#8c8c8c"/><path d="M51 26 L90.2 27.1" fill="none" stroke="#8c8c8c" stroke-width="1.6"/><path d="M91.3 27.5 Q92 24.2 95.5 24.4 Q98 25 97.4 28.2 Z" fill="#8c8c8c"/><path d="M83.7 34 Q92.4 27.5 104.5 34 Z" fill="#8c8c8c"/><path d="M97.9 28.2 L105.5 34.8" fill="none" stroke="#8c8c8c" stroke-width="1.0"/></g><g transform="translate(386.60,400.80)"><text x="0" y="7.9" textLength="104.5" lengthAdjust="spacingAndGlyphs" font-family='"Liberation Sans"' font-weight="bold" font-size="10.8" fill="#8c8c8c" stroke="#8c8c8c" stroke-width="0.35">LOCOSTBUILDERS.CO.UK</text><path d="M2 25.9 L17.6 14.1 L11 23.6 M18.3 14.6 L16.7 24.8 M19.5 17.5 L20 24.8 M22.3 18 L22.8 24.8" fill="none" stroke="#8c8c8c" stroke-width="1.3"/><path d="M2 25.9 L15 25.9" fill="none" stroke="#8c8c8c" stroke-width="1.2"/><path d="M0.4 32.1 Q13.9 19.7 28.5 32.1" fill="none" stroke="#8c8c8c" stroke-width="1.4"/><path d="M2.2 33.6 Q13.9 22.2 26.8 33.6" fill="none" stroke="#8c8c8c" stroke-width="1.0"/><path d="M4.9 34.6 Q13.9 26.5 21.2 34.6 Z" fill="#8c8c8c"/><path d="M28 32.4 L44 33" fill="none" stroke="#8c8c8c" stroke-width="1.2"/><path d="M42.1 32.6 L44.3 26 M50.8 23.8 L52.5 32.6" fill="none" stroke="#8c8c8c" stroke-width="1.2"/><ellipse cx="50.3" cy="22.3" rx="1.8" ry="1.8" fill="#8c8c8c"/><path d="M51 26 L90.2 27.1" fill="none" stroke="#8c8c8c" stroke-width="1.6"/><path d="M91.3 27.5 Q92 24.2 95.5 24.4 Q98 25 97.4 28.2 Z" fill="#8c8c8c"/><path d="M83.7 34 Q92.4 27.5 104.5 34 Z" fill="#8c8c8c"/><path d="M97.9 28.2 L105.5 34.8" fill="none" stroke="#8c8c8c" stroke-width="1.0"/></g><g transform="translate(497.80,400.80)"><text x="0" y="7.9" textLength="104.5" lengthAdjust="spacingAndGlyphs" font-family='"Liberation Sans"' font-weight="bold" font-size="10.8" fill="#8c8c8c" stroke="#8c8c8c" stroke-width="0.35">LOCOSTBUILDERS.CO.UK</text><path d="M2 25.9 L17.6 14.1 L11 23.6 M18.3 14.6 L16.7 24.8 M19.5 17.5 L20 24.8 M22.3 18 L22.8 24.8" fill="none" stroke="#8c8c8c" stroke-width="1.3"/><path d="M2 25.9 L15 25.9" fill="none" stroke="#8c8c8c" stroke-width="1.2"/><path d="M0.4 32.1 Q13.9 19.7 28.5 32.1" fill="none" stroke="#8c8c8c" stroke-width="1.4"/><path d="M2.2 33.6 Q13.9 22.2 26.8 33.6" fill="none" stroke="#8c8c8c" stroke-width="1.0"/><path d="M4.9 34.6 Q13.9 26.5 21.2 34.6 Z" fill="#8c8c8c"/><path d="M28 32.4 L44 33" fill="none" stroke="#8c8c8c" stroke-width="1.2"/><path d="M42.1 32.6 L44.3 26 M50.8 23.8 L52.5 32.6" fill="none" stroke="#8c8c8c" stroke-width="1.2"/><ellipse cx="50.3" cy="22.3" rx="1.8" ry="1.8" fill="#8c8c8c"/><path d="M51 26 L90.2 27.1" fill="none" stroke="#8c8c8c" stroke-width="1.6"/><path d="M91.3 27.5 Q92 24.2 95.5 24.4 Q98 25 97.4 28.2 Z" fill="#8c8c8c"/><path d="M83.7 34 Q92.4 27.5 104.5 34 Z" fill="#8c8c8c"/><path d="M97.9 28.2 L105.5 34.8" fill="none" stroke="#8c8c8c" stroke-width="1.0"/></g><g transform="translate(609.00,400.80)"><text x="0" y="7.9" textLength="104.5" lengthAdjust="spacingAndGlyphs" font-family='"Liberation Sans"' font-weight="bold" font-size="10.8" fill="#8c8c8c" stroke="#8c8c8c" stroke-width="0.35">LOCOSTBUILDERS.CO.UK</text><path d="M2 25.9 L17.6 14.1 L11 23.6 M18.3 14.6 L16.7 24.8 M19.5 17.5 L20 24.8 M22.3 18 L22.8 24.8" fill="none" stroke="#8c8c8c" stroke-width="1.3"/><path d="M2 25.9 L15 25.9" fill="none" stroke="#8c8c8c" stroke-width="1.2"/><path d="M0.4 32.1 Q13.9 19.7 28.5 32.1" fill="none" stroke="#8c8c8c" stroke-width="1.4"/><path d="M2.2 33.6 Q13.9 22.2 26.8 33.6" fill="none" stroke="#8c8c8c" stroke-width="1.0"/><path d="M4.9 34.6 Q13.9 26.5 21.2 34.6 Z" fill="#8c8c8c"/><path d="M28 32.4 L44 33" fill="none" stroke="#8c8c8c" stroke-width="1.2"/><path d="M42.1 32.6 L44.3 26 M50.8 23.8 L52.5 32.6" fill="none" stroke="#8c8c8c" stroke-width="1.2"/><ellipse cx="50.3" cy="22.3" rx="1.8" ry="1.8" fill="#8c8c8c"/><path d="M51 26 L90.2 27.1" fill="none" stroke="#8c8c8c" stroke-width="1.6"/><path d="M91.3 27.5 Q92 24.2 95.5 24.4 Q98 25 97.4 28.2 Z" fill="#8c8c8c"/><path d="M83.7 34 Q92.4 27.5 104.5 34 Z" fill="#8c8c8c"/><path d="M97.9 28.2 L105.5 34.8" fill="none" stroke="#8c8c8c" stroke-width="1.0"/></g><g transform="translate(720.20,400.80)"><text x="0" y="7.9" textLength="104.5" lengthAdjust="spacingAndGlyphs" font-family='"Liberation Sans"' font-weight="bold" font-size="10.8" fill="#8c8c8c" stroke="#8c8c8c" stroke-width="0.35">LOCOSTBUILDERS.CO.UK</text><path d="M2 25.9 L17.6 14.1 L11 23.6 M18.3 14.6 L16.7 24.8 M19.5 17.5 L20 24.8 M22.3 18 L22.8 24.8" fill="none" stroke="#8c8c8c" stroke-width="1.3"/><path d="M2 25.9 L15 25.9" fill="none" stroke="#8c8c8c" stroke-width="1.2"/><path d="M0.4 32.1 Q13.9 19.7 28.5 32.1" fill="none" stroke="#8c8c8c" stroke-width="1.4"/><path d="M2.2 33.6 Q13.9 22.2 26.8 33.6" fill="none" stroke="#8c8c8c" stroke-width="1.0"/><path d="M4.9 34.6 Q13.9 26.5 21.2 34.6 Z" fill="#8c8c8c"/><path d="M28 32.4 L44 33" fill="none" stroke="#8c8c8c" stroke-width="1.2"/><path d="M42.1 32.6 L44.3 26 M50.8 23.8 L52.5 32.6" fill="none" stroke="#8c8c8c" stroke-width="1.2"/><ellipse cx="50.3" cy="22.3" rx="1.8" ry="1.8" fill="#8c8c8c"/><path d="M51 26 L90.2 27.1" fill="none" stroke="#8c8c8c" stroke-width="1.6"/><path d="M91.3 27.5 Q92 24.2 95.5 24.4 Q98 25 97.4 28.2 Z" fill="#8c8c8c"/><path d="M83.7 34 Q92.4 27.5 104.5 34 Z" fill="#8c8c8c"/><path d="M97.9 28.2 L105.5 34.8" fill="none" stroke="#8c8c8c" stroke-width="1.0"/></g><g transform="translate(-58.20,436.40)"><text x="0" y="7.9" textLength="104.5" lengthAdjust="spacingAndGlyphs" font-family='"Liberation Sans"' font-weight="bold" font-size="10.8" fill="#8c8c8c" stroke="#8c8c8c" stroke-width="0.35">LOCOSTBUILDERS.CO.UK</text><path d="M2 25.9 L17.6 14.1 L11 23.6 M18.3 14.6 L16.7 24.8 M19.5 17.5 L20 24.8 M22.3 18 L22.8 24.8" fill="none" stroke="#8c8c8c" stroke-width="1.3"/><path d="M2 25.9 L15 25.9" fill="none" stroke="#8c8c8c" stroke-width="1.2"/><path d="M0.4 32.1 Q13.9 19.7 28.5 32.1" fill="none" stroke="#8c8c8c" stroke-width="1.4"/><path d="M2.2 33.6 Q13.9 22.2 26.8 33.6" fill="none" stroke="#8c8c8c" stroke-width="1.0"/><path d="M4.9 34.6 Q13.9 26.5 21.2 34.6 Z" fill="#8c8c8c"/><path d="M28 32.4 L44 33" fill="none" stroke="#8c8c8c" stroke-width="1.2"/><path d="M42.1 32.6 L44.3 26 M50.8 23.8 L52.5 32.6" fill="none" stroke="#8c8c8c" stroke-width="1.2"/><ellipse cx="50.3" cy="22.3" rx="1.8" ry="1.8" fill="#8c8c8c"/><path d="M51 26 L90.2 27.1" fill="none" stroke="#8c8c8c" stroke-width="1.6"/><path d="M91.3 27.5 Q92 24.2 95.5 24.4 Q98 25 97.4 28.2 Z" fill="#8c8c8c"/><path d="M83.7 34 Q92.4 27.5 104.5 34 Z" fill="#8c8c8c"/><path d="M97.9 28.2 L105.5 34.8" fill="none" stroke="#8c8c8c" stroke-width="1.0"/></g><g transform="translate(53.00,436.40)"><text x="0" y="7.9" textLength="104.5" lengthAdjust="spacingAndGlyphs" font-family='"Liberation Sans"' font-weight="bold" font-size="10.8" fill="#8c8c8c" stroke="#8c8c8c" stroke-width="0.35">LOCOSTBUILDERS.CO.UK</text><path d="M2 25.9 L17.6 14.1 L11 23.6 M18.3 14.6 L16.7 24.8 M19.5 17.5 L20 24.8 M22.3 18 L22.8 24.8" fill="none" stroke="#8c8c8c" stroke-width="1.3"/><path d="M2 25.9 L15 25.9" fill="none" stroke="#8c8c8c" stroke-width="1.2"/><path d="M0.4 32.1 Q13.9 19.7 28.5 32.1" fill="none" stroke="#8c8c8c" stroke-width="1.4"/><path d="M2.2 33.6 Q13.9 22.2 26.8 33.6" fill="none" stroke="#8c8c8c" stroke-width="1.0"/><path d="M4.9 34.6 Q13.9 26.5 21.2 34.6 Z" fill="#8c8c8c"/><path d="M28 32.4 L44 33" fill="none" stroke="#8c8c8c" stroke-width="1.2"/><path d="M42.1 32.6 L44.3 26 M50.8 23.8 L52.5 32.6" fill="none" stroke="#8c8c8c" stroke-width="1.2"/><ellipse cx="50.3" cy="22.3" rx="1.8" ry="1.8" fill="#8c8c8c"/><path d="M51 26 L90.2 27.1" fill="none" stroke="#8c8c8c" stroke-width="1.6"/><path d="M91.3 27.5 Q92 24.2 95.5 24.4 Q98 25 97.4 28.2 Z" fill="#8c8c8c"/><path d="M83.7 34 Q92.4 27.5 104.5 34 Z" fill="#8c8c8c"/><path d="M97.9 28.2 L105.5 34.8" fill="none" stroke="#8c8c8c" stroke-width="1.0"/></g><g transform="translate(164.20,436.40)"><text x="0" y="7.9" textLength="104.5" lengthAdjust="spacingAndGlyphs" font-family='"Liberation Sans"' font-weight="bold" font-size="10.8" fill="#8c8c8c" stroke="#8c8c8c" stroke-width="0.35">LOCOSTBUILDERS.CO.UK</text><path d="M2 25.9 L17.6 14.1 L11 23.6 M18.3 14.6 L16.7 24.8 M19.5 17.5 L20 24.8 M22.3 18 L22.8 24.8" fill="none" stroke="#8c8c8c" stroke-width="1.3"/><path d="M2 25.9 L15 25.9" fill="none" stroke="#8c8c8c" stroke-width="1.2"/><path d="M0.4 32.1 Q13.9 19.7 28.5 32.1" fill="none" stroke="#8c8c8c" stroke-width="1.4"/><path d="M2.2 33.6 Q13.9 22.2 26.8 33.6" fill="none" stroke="#8c8c8c" stroke-width="1.0"/><path d="M4.9 34.6 Q13.9 26.5 21.2 34.6 Z" fill="#8c8c8c"/><path d="M28 32.4 L44 33" fill="none" stroke="#8c8c8c" stroke-width="1.2"/><path d="M42.1 32.6 L44.3 26 M50.8 23.8 L52.5 32.6" fill="none" stroke="#8c8c8c" stroke-width="1.2"/><ellipse cx="50.3" cy="22.3" rx="1.8" ry="1.8" fill="#8c8c8c"/><path d="M51 26 L90.2 27.1" fill="none" stroke="#8c8c8c" stroke-width="1.6"/><path d="M91.3 27.5 Q92 24.2 95.5 24.4 Q98 25 97.4 28.2 Z" fill="#8c8c8c"/><path d="M83.7 34 Q92.4 27.5 104.5 34 Z" fill="#8c8c8c"/><path d="M97.9 28.2 L105.5 34.8" fill="none" stroke="#8c8c8c" stroke-width="1.0"/></g><g transform="translate(275.40,436.40)"><text x="0" y="7.9" textLength="104.5" lengthAdjust="spacingAndGlyphs" font-family='"Liberation Sans"' font-weight="bold" font-size="10.8" fill="#8c8c8c" stroke="#8c8c8c" stroke-width="0.35">LOCOSTBUILDERS.CO.UK</text><path d="M2 25.9 L17.6 14.1 L11 23.6 M18.3 14.6 L16.7 24.8 M19.5 17.5 L20 24.8 M22.3 18 L22.8 24.8" fill="none" stroke="#8c8c8c" stroke-width="1.3"/><path d="M2 25.9 L15 25.9" fill="none" stroke="#8c8c8c" stroke-width="1.2"/><path d="M0.4 32.1 Q13.9 19.7 28.5 32.1" fill="none" stroke="#8c8c8c" stroke-width="1.4"/><path d="M2.2 33.6 Q13.9 22.2 26.8 33.6" fill="none" stroke="#8c8c8c" stroke-width="1.0"/><path d="M4.9 34.6 Q13.9 26.5 21.2 34.6 Z" fill="#8c8c8c"/><path d="M28 32.4 L44 33" fill="none" stroke="#8c8c8c" stroke-width="1.2"/><path d="M42.1 32.6 L44.3 26 M50.8 23.8 L52.5 32.6" fill="none" stroke="#8c8c8c" stroke-width="1.2"/><ellipse cx="50.3" cy="22.3" rx="1.8" ry="1.8" fill="#8c8c8c"/><path d="M51 26 L90.2 27.1" fill="none" stroke="#8c8c8c" stroke-width="1.6"/><path d="M91.3 27.5 Q92 24.2 95.5 24.4 Q98 25 97.4 28.2 Z" fill="#8c8c8c"/><path d="M83.7 34 Q92.4 27.5 104.5 34 Z" fill="#8c8c8c"/><path d="M97.9 28.2 L105.5 34.8" fill="none" stroke="#8c8c8c" stroke-width="1.0"/></g><g transform="translate(386.60,436.40)"><text x="0" y="7.9" textLength="104.5" lengthAdjust="spacingAndGlyphs" font-family='"Liberation Sans"' font-weight="bold" font-size="10.8" fill="#8c8c8c" stroke="#8c8c8c" stroke-width="0.35">LOCOSTBUILDERS.CO.UK</text><path d="M2 25.9 L17.6 14.1 L11 23.6 M18.3 14.6 L16.7 24.8 M19.5 17.5 L20 24.8 M22.3 18 L22.8 24.8" fill="none" stroke="#8c8c8c" stroke-width="1.3"/><path d="M2 25.9 L15 25.9" fill="none" stroke="#8c8c8c" stroke-width="1.2"/><path d="M0.4 32.1 Q13.9 19.7 28.5 32.1" fill="none" stroke="#8c8c8c" stroke-width="1.4"/><path d="M2.2 33.6 Q13.9 22.2 26.8 33.6" fill="none" stroke="#8c8c8c" stroke-width="1.0"/><path d="M4.9 34.6 Q13.9 26.5 21.2 34.6 Z" fill="#8c8c8c"/><path d="M28 32.4 L44 33" fill="none" stroke="#8c8c8c" stroke-width="1.2"/><path d="M42.1 32.6 L44.3 26 M50.8 23.8 L52.5 32.6" fill="none" stroke="#8c8c8c" stroke-width="1.2"/><ellipse cx="50.3" cy="22.3" rx="1.8" ry="1.8" fill="#8c8c8c"/><path d="M51 26 L90.2 27.1" fill="none" stroke="#8c8c8c" stroke-width="1.6"/><path d="M91.3 27.5 Q92 24.2 95.5 24.4 Q98 25 97.4 28.2 Z" fill="#8c8c8c"/><path d="M83.7 34 Q92.4 27.5 104.5 34 Z" fill="#8c8c8c"/><path d="M97.9 28.2 L105.5 34.8" fill="none" stroke="#8c8c8c" stroke-width="1.0"/></g><g transform="translate(497.80,436.40)"><text x="0" y="7.9" textLength="104.5" lengthAdjust="spacingAndGlyphs" font-family='"Liberation Sans"' font-weight="bold" font-size="10.8" fill="#8c8c8c" stroke="#8c8c8c" stroke-width="0.35">LOCOSTBUILDERS.CO.UK</text><path d="M2 25.9 L17.6 14.1 L11 23.6 M18.3 14.6 L16.7 24.8 M19.5 17.5 L20 24.8 M22.3 18 L22.8 24.8" fill="none" stroke="#8c8c8c" stroke-width="1.3"/><path d="M2 25.9 L15 25.9" fill="none" stroke="#8c8c8c" stroke-width="1.2"/><path d="M0.4 32.1 Q13.9 19.7 28.5 32.1" fill="none" stroke="#8c8c8c" stroke-width="1.4"/><path d="M2.2 33.6 Q13.9 22.2 26.8 33.6" fill="none" stroke="#8c8c8c" stroke-width="1.0"/><path d="M4.9 34.6 Q13.9 26.5 21.2 34.6 Z" fill="#8c8c8c"/><path d="M28 32.4 L44 33" fill="none" stroke="#8c8c8c" stroke-width="1.2"/><path d="M42.1 32.6 L44.3 26 M50.8 23.8 L52.5 32.6" fill="none" stroke="#8c8c8c" stroke-width="1.2"/><ellipse cx="50.3" cy="22.3" rx="1.8" ry="1.8" fill="#8c8c8c"/><path d="M51 26 L90.2 27.1" fill="none" stroke="#8c8c8c" stroke-width="1.6"/><path d="M91.3 27.5 Q92 24.2 95.5 24.4 Q98 25 97.4 28.2 Z" fill="#8c8c8c"/><path d="M83.7 34 Q92.4 27.5 104.5 34 Z" fill="#8c8c8c"/><path d="M97.9 28.2 L105.5 34.8" fill="none" stroke="#8c8c8c" stroke-width="1.0"/></g><g transform="translate(609.00,436.40)"><text x="0" y="7.9" textLength="104.5" lengthAdjust="spacingAndGlyphs" font-family='"Liberation Sans"' font-weight="bold" font-size="10.8" fill="#8c8c8c" stroke="#8c8c8c" stroke-width="0.35">LOCOSTBUILDERS.CO.UK</text><path d="M2 25.9 L17.6 14.1 L11 23.6 M18.3 14.6 L16.7 24.8 M19.5 17.5 L20 24.8 M22.3 18 L22.8 24.8" fill="none" stroke="#8c8c8c" stroke-width="1.3"/><path d="M2 25.9 L15 25.9" fill="none" stroke="#8c8c8c" stroke-width="1.2"/><path d="M0.4 32.1 Q13.9 19.7 28.5 32.1" fill="none" stroke="#8c8c8c" stroke-width="1.4"/><path d="M2.2 33.6 Q13.9 22.2 26.8 33.6" fill="none" stroke="#8c8c8c" stroke-width="1.0"/><path d="M4.9 34.6 Q13.9 26.5 21.2 34.6 Z" fill="#8c8c8c"/><path d="M28 32.4 L44 33" fill="none" stroke="#8c8c8c" stroke-width="1.2"/><path d="M42.1 32.6 L44.3 26 M50.8 23.8 L52.5 32.6" fill="none" stroke="#8c8c8c" stroke-width="1.2"/><ellipse cx="50.3" cy="22.3" rx="1.8" ry="1.8" fill="#8c8c8c"/><path d="M51 26 L90.2 27.1" fill="none" stroke="#8c8c8c" stroke-width="1.6"/><path d="M91.3 27.5 Q92 24.2 95.5 24.4 Q98 25 97.4 28.2 Z" fill="#8c8c8c"/><path d="M83.7 34 Q92.4 27.5 104.5 34 Z" fill="#8c8c8c"/><path d="M97.9 28.2 L105.5 34.8" fill="none" stroke="#8c8c8c" stroke-width="1.0"/></g><g transform="translate(720.20,436.40)"><text x="0" y="7.9" textLength="104.5" lengthAdjust="spacingAndGlyphs" font-family='"Liberation Sans"' font-weight="bold" font-size="10.8" fill="#8c8c8c" stroke="#8c8c8c" stroke-width="0.35">LOCOSTBUILDERS.CO.UK</text><path d="M2 25.9 L17.6 14.1 L11 23.6 M18.3 14.6 L16.7 24.8 M19.5 17.5 L20 24.8 M22.3 18 L22.8 24.8" fill="none" stroke="#8c8c8c" stroke-width="1.3"/><path d="M2 25.9 L15 25.9" fill="none" stroke="#8c8c8c" stroke-width="1.2"/><path d="M0.4 32.1 Q13.9 19.7 28.5 32.1" fill="none" stroke="#8c8c8c" stroke-width="1.4"/><path d="M2.2 33.6 Q13.9 22.2 26.8 33.6" fill="none" stroke="#8c8c8c" stroke-width="1.0"/><path d="M4.9 34.6 Q13.9 26.5 21.2 34.6 Z" fill="#8c8c8c"/><path d="M28 32.4 L44 33" fill="none" stroke="#8c8c8c" stroke-width="1.2"/><path d="M42.1 32.6 L44.3 26 M50.8 23.8 L52.5 32.6" fill="none" stroke="#8c8c8c" stroke-width="1.2"/><ellipse cx="50.3" cy="22.3" rx="1.8" ry="1.8" fill="#8c8c8c"/><path d="M51 26 L90.2 27.1" fill="none" stroke="#8c8c8c" stroke-width="1.6"/><path d="M91.3 27.5 Q92 24.2 95.5 24.4 Q98 25 97.4 28.2 Z" fill="#8c8c8c"/><path d="M83.7 34 Q92.4 27.5 104.5 34 Z" fill="#8c8c8c"/><path d="M97.9 28.2 L105.5 34.8" fill="none" stroke="#8c8c8c" stroke-width="1.0"/></g><g transform="translate(-58.20,472.00)"><text x="0" y="7.9" textLength="104.5" lengthAdjust="spacingAndGlyphs" font-family='"Liberation Sans"' font-weight="bold" font-size="10.8" fill="#8c8c8c" stroke="#8c8c8c" stroke-width="0.35">LOCOSTBUILDERS.CO.UK</text><path d="M2 25.9 L17.6 14.1 L11 23.6 M18.3 14.6 L16.7 24.8 M19.5 17.5 L20 24.8 M22.3 18 L22.8 24.8" fill="none" stroke="#8c8c8c" stroke-width="1.3"/><path d="M2 25.9 L15 25.9" fill="none" stroke="#8c8c8c" stroke-width="1.2"/><path d="M0.4 32.1 Q13.9 19.7 28.5 32.1" fill="none" stroke="#8c8c8c" stroke-width="1.4"/><path d="M2.2 33.6 Q13.9 22.2 26.8 33.6" fill="none" stroke="#8c8c8c" stroke-width="1.0"/><path d="M4.9 34.6 Q13.9 26.5 21.2 34.6 Z" fill="#8c8c8c"/><path d="M28 32.4 L44 33" fill="none" stroke="#8c8c8c" stroke-width="1.2"/><path d="M42.1 32.6 L44.3 26 M50.8 23.8 L52.5 32.6" fill="none" stroke="#8c8c8c" stroke-width="1.2"/><ellipse cx="50.3" cy="22.3" rx="1.8" ry="1.8" fill="#8c8c8c"/><path d="M51 26 L90.2 27.1" fill="none" stroke="#8c8c8c" stroke-width="1.6"/><path d="M91.3 27.5 Q92 24.2 95.5 24.4 Q98 25 97.4 28.2 Z" fill="#8c8c8c"/><path d="M83.7 34 Q92.4 27.5 104.5 34 Z" fill="#8c8c8c"/><path d="M97.9 28.2 L105.5 34.8" fill="none" stroke="#8c8c8c" stroke-width="1.0"/></g><g transform="translate(53.00,472.00)"><text x="0" y="7.9" textLength="104.5" lengthAdjust="spacingAndGlyphs" font-family='"Liberation Sans"' font-weight="bold" font-size="10.8" fill="#8c8c8c" stroke="#8c8c8c" stroke-width="0.35">LOCOSTBUILDERS.CO.UK</text><path d="M2 25.9 L17.6 14.1 L11 23.6 M18.3 14.6 L16.7 24.8 M19.5 17.5 L20 24.8 M22.3 18 L22.8 24.8" fill="none" stroke="#8c8c8c" stroke-width="1.3"/><path d="M2 25.9 L15 25.9" fill="none" stroke="#8c8c8c" stroke-width="1.2"/><path d="M0.4 32.1 Q13.9 19.7 28.5 32.1" fill="none" stroke="#8c8c8c" stroke-width="1.4"/><path d="M2.2 33.6 Q13.9 22.2 26.8 33.6" fill="none" stroke="#8c8c8c" stroke-width="1.0"/><path d="M4.9 34.6 Q13.9 26.5 21.2 34.6 Z" fill="#8c8c8c"/><path d="M28 32.4 L44 33" fill="none" stroke="#8c8c8c" stroke-width="1.2"/><path d="M42.1 32.6 L44.3 26 M50.8 23.8 L52.5 32.6" fill="none" stroke="#8c8c8c" stroke-width="1.2"/><ellipse cx="50.3" cy="22.3" rx="1.8" ry="1.8" fill="#8c8c8c"/><path d="M51 26 L90.2 27.1" fill="none" stroke="#8c8c8c" stroke-width="1.6"/><path d="M91.3 27.5 Q92 24.2 95.5 24.4 Q98 25 97.4 28.2 Z" fill="#8c8c8c"/><path d="M83.7 34 Q92.4 27.5 104.5 34 Z" fill="#8c8c8c"/><path d="M97.9 28.2 L105.5 34.8" fill="none" stroke="#8c8c8c" stroke-width="1.0"/></g><g transform="translate(164.20,472.00)"><text x="0" y="7.9" textLength="104.5" lengthAdjust="spacingAndGlyphs" font-family='"Liberation Sans"' font-weight="bold" font-size="10.8" fill="#8c8c8c" stroke="#8c8c8c" stroke-width="0.35">LOCOSTBUILDERS.CO.UK</text><path d="M2 25.9 L17.6 14.1 L11 23.6 M18.3 14.6 L16.7 24.8 M19.5 17.5 L20 24.8 M22.3 18 L22.8 24.8" fill="none" stroke="#8c8c8c" stroke-width="1.3"/><path d="M2 25.9 L15 25.9" fill="none" stroke="#8c8c8c" stroke-width="1.2"/><path d="M0.4 32.1 Q13.9 19.7 28.5 32.1" fill="none" stroke="#8c8c8c" stroke-width="1.4"/><path d="M2.2 33.6 Q13.9 22.2 26.8 33.6" fill="none" stroke="#8c8c8c" stroke-width="1.0"/><path d="M4.9 34.6 Q13.9 26.5 21.2 34.6 Z" fill="#8c8c8c"/><path d="M28 32.4 L44 33" fill="none" stroke="#8c8c8c" stroke-width="1.2"/><path d="M42.1 32.6 L44.3 26 M50.8 23.8 L52.5 32.6" fill="none" stroke="#8c8c8c" stroke-width="1.2"/><ellipse cx="50.3" cy="22.3" rx="1.8" ry="1.8" fill="#8c8c8c"/><path d="M51 26 L90.2 27.1" fill="none" stroke="#8c8c8c" stroke-width="1.6"/><path d="M91.3 27.5 Q92 24.2 95.5 24.4 Q98 25 97.4 28.2 Z" fill="#8c8c8c"/><path d="M83.7 34 Q92.4 27.5 104.5 34 Z" fill="#8c8c8c"/><path d="M97.9 28.2 L105.5 34.8" fill="none" stroke="#8c8c8c" stroke-width="1.0"/></g><g transform="translate(275.40,472.00)"><text x="0" y="7.9" textLength="104.5" lengthAdjust="spacingAndGlyphs" font-family='"Liberation Sans"' font-weight="bold" font-size="10.8" fill="#8c8c8c" stroke="#8c8c8c" stroke-width="0.35">LOCOSTBUILDERS.CO.UK</text><path d="M2 25.9 L17.6 14.1 L11 23.6 M18.3 14.6 L16.7 24.8 M19.5 17.5 L20 24.8 M22.3 18 L22.8 24.8" fill="none" stroke="#8c8c8c" stroke-width="1.3"/><path d="M2 25.9 L15 25.9" fill="none" stroke="#8c8c8c" stroke-width="1.2"/><path d="M0.4 32.1 Q13.9 19.7 28.5 32.1" fill="none" stroke="#8c8c8c" stroke-width="1.4"/><path d="M2.2 33.6 Q13.9 22.2 26.8 33.6" fill="none" stroke="#8c8c8c" stroke-width="1.0"/><path d="M4.9 34.6 Q13.9 26.5 21.2 34.6 Z" fill="#8c8c8c"/><path d="M28 32.4 L44 33" fill="none" stroke="#8c8c8c" stroke-width="1.2"/><path d="M42.1 32.6 L44.3 26 M50.8 23.8 L52.5 32.6" fill="none" stroke="#8c8c8c" stroke-width="1.2"/><ellipse cx="50.3" cy="22.3" rx="1.8" ry="1.8" fill="#8c8c8c"/><path d="M51 26 L90.2 27.1" fill="none" stroke="#8c8c8c" stroke-width="1.6"/><path d="M91.3 27.5 Q92 24.2 95.5 24.4 Q98 25 97.4 28.2 Z" fill="#8c8c8c"/><path d="M83.7 34 Q92.4 27.5 104.5 34 Z" fill="#8c8c8c"/><path d="M97.9 28.2 L105.5 34.8" fill="none" stroke="#8c8c8c" stroke-width="1.0"/></g><g transform="translate(386.60,472.00)"><text x="0" y="7.9" textLength="104.5" lengthAdjust="spacingAndGlyphs" font-family='"Liberation Sans"' font-weight="bold" font-size="10.8" fill="#8c8c8c" stroke="#8c8c8c" stroke-width="0.35">LOCOSTBUILDERS.CO.UK</text><path d="M2 25.9 L17.6 14.1 L11 23.6 M18.3 14.6 L16.7 24.8 M19.5 17.5 L20 24.8 M22.3 18 L22.8 24.8" fill="none" stroke="#8c8c8c" stroke-width="1.3"/><path d="M2 25.9 L15 25.9" fill="none" stroke="#8c8c8c" stroke-width="1.2"/><path d="M0.4 32.1 Q13.9 19.7 28.5 32.1" fill="none" stroke="#8c8c8c" stroke-width="1.4"/><path d="M2.2 33.6 Q13.9 22.2 26.8 33.6" fill="none" stroke="#8c8c8c" stroke-width="1.0"/><path d="M4.9 34.6 Q13.9 26.5 21.2 34.6 Z" fill="#8c8c8c"/><path d="M28 32.4 L44 33" fill="none" stroke="#8c8c8c" stroke-width="1.2"/><path d="M42.1 32.6 L44.3 26 M50.8 23.8 L52.5 32.6" fill="none" stroke="#8c8c8c" stroke-width="1.2"/><ellipse cx="50.3" cy="22.3" rx="1.8" ry="1.8" fill="#8c8c8c"/><path d="M51 26 L90.2 27.1" fill="none" stroke="#8c8c8c" stroke-width="1.6"/><path d="M91.3 27.5 Q92 24.2 95.5 24.4 Q98 25 97.4 28.2 Z" fill="#8c8c8c"/><path d="M83.7 34 Q92.4 27.5 104.5 34 Z" fill="#8c8c8c"/><path d="M97.9 28.2 L105.5 34.8" fill="none" stroke="#8c8c8c" stroke-width="1.0"/></g><g transform="translate(497.80,472.00)"><text x="0" y="7.9" textLength="104.5" lengthAdjust="spacingAndGlyphs" font-family='"Liberation Sans"' font-weight="bold" font-size="10.8" fill="#8c8c8c" stroke="#8c8c8c" stroke-width="0.35">LOCOSTBUILDERS.CO.UK</text><path d="M2 25.9 L17.6 14.1 L11 23.6 M18.3 14.6 L16.7 24.8 M19.5 17.5 L20 24.8 M22.3 18 L22.8 24.8" fill="none" stroke="#8c8c8c" stroke-width="1.3"/><path d="M2 25.9 L15 25.9" fill="none" stroke="#8c8c8c" stroke-width="1.2"/><path d="M0.4 32.1 Q13.9 19.7 28.5 32.1" fill="none" stroke="#8c8c8c" stroke-width="1.4"/><path d="M2.2 33.6 Q13.9 22.2 26.8 33.6" fill="none" stroke="#8c8c8c" stroke-width="1.0"/><path d="M4.9 34.6 Q13.9 26.5 21.2 34.6 Z" fill="#8c8c8c"/><path d="M28 32.4 L44 33" fill="none" stroke="#8c8c8c" stroke-width="1.2"/><path d="M42.1 32.6 L44.3 26 M50.8 23.8 L52.5 32.6" fill="none" stroke="#8c8c8c" stroke-width="1.2"/><ellipse cx="50.3" cy="22.3" rx="1.8" ry="1.8" fill="#8c8c8c"/><path d="M51 26 L90.2 27.1" fill="none" stroke="#8c8c8c" stroke-width="1.6"/><path d="M91.3 27.5 Q92 24.2 95.5 24.4 Q98 25 97.4 28.2 Z" fill="#8c8c8c"/><path d="M83.7 34 Q92.4 27.5 104.5 34 Z" fill="#8c8c8c"/><path d="M97.9 28.2 L105.5 34.8" fill="none" stroke="#8c8c8c" stroke-width="1.0"/></g><g transform="translate(609.00,472.00)"><text x="0" y="7.9" textLength="104.5" lengthAdjust="spacingAndGlyphs" font-family='"Liberation Sans"' font-weight="bold" font-size="10.8" fill="#8c8c8c" stroke="#8c8c8c" stroke-width="0.35">LOCOSTBUILDERS.CO.UK</text><path d="M2 25.9 L17.6 14.1 L11 23.6 M18.3 14.6 L16.7 24.8 M19.5 17.5 L20 24.8 M22.3 18 L22.8 24.8" fill="none" stroke="#8c8c8c" stroke-width="1.3"/><path d="M2 25.9 L15 25.9" fill="none" stroke="#8c8c8c" stroke-width="1.2"/><path d="M0.4 32.1 Q13.9 19.7 28.5 32.1" fill="none" stroke="#8c8c8c" stroke-width="1.4"/><path d="M2.2 33.6 Q13.9 22.2 26.8 33.6" fill="none" stroke="#8c8c8c" stroke-width="1.0"/><path d="M4.9 34.6 Q13.9 26.5 21.2 34.6 Z" fill="#8c8c8c"/><path d="M28 32.4 L44 33" fill="none" stroke="#8c8c8c" stroke-width="1.2"/><path d="M42.1 32.6 L44.3 26 M50.8 23.8 L52.5 32.6" fill="none" stroke="#8c8c8c" stroke-width="1.2"/><ellipse cx="50.3" cy="22.3" rx="1.8" ry="1.8" fill="#8c8c8c"/><path d="M51 26 L90.2 27.1" fill="none" stroke="#8c8c8c" stroke-width="1.6"/><path d="M91.3 27.5 Q92 24.2 95.5 24.4 Q98 25 97.4 28.2 Z" fill="#8c8c8c"/><path d="M83.7 34 Q92.4 27.5 104.5 34 Z" fill="#8c8c8c"/><path d="M97.9 28.2 L105.5 34.8" fill="none" stroke="#8c8c8c" stroke-width="1.0"/></g><g transform="translate(720.20,472.00)"><text x="0" y="7.9" textLength="104.5" lengthAdjust="spacingAndGlyphs" font-family='"Liberation Sans"' font-weight="bold" font-size="10.8" fill="#8c8c8c" stroke="#8c8c8c" stroke-width="0.35">LOCOSTBUILDERS.CO.UK</text><path d="M2 25.9 L17.6 14.1 L11 23.6 M18.3 14.6 L16.7 24.8 M19.5 17.5 L20 24.8 M22.3 18 L22.8 24.8" fill="none" stroke="#8c8c8c" stroke-width="1.3"/><path d="M2 25.9 L15 25.9" fill="none" stroke="#8c8c8c" stroke-width="1.2"/><path d="M0.4 32.1 Q13.9 19.7 28.5 32.1" fill="none" stroke="#8c8c8c" stroke-width="1.4"/><path d="M2.2 33.6 Q13.9 22.2 26.8 33.6" fill="none" stroke="#8c8c8c" stroke-width="1.0"/><path d="M4.9 34.6 Q13.9 26.5 21.2 34.6 Z" fill="#8c8c8c"/><path d="M28 32.4 L44 33" fill="none" stroke="#8c8c8c" stroke-width="1.2"/><path d="M42.1 32.6 L44.3 26 M50.8 23.8 L52.5 32.6" fill="none" stroke="#8c8c8c" stroke-width="1.2"/><ellipse cx="50.3" cy="22.3" rx="1.8" ry="1.8" fill="#8c8c8c"/><path d="M51 26 L90.2 27.1" fill="none" stroke="#8c8c8c" stroke-width="1.6"/><path d="M91.3 27.5 Q92 24.2 95.5 24.4 Q98 25 97.4 28.2 Z" fill="#8c8c8c"/><path d="M83.7 34 Q92.4 27.5 104.5 34 Z" fill="#8c8c8c"/><path d="M97.9 28.2 L105.5 34.8" fill="none" stroke="#8c8c8c" stroke-width="1.0"/></g></svg><div class="a" style="left:637px;top:44px;width:3px;height:390px;background:#f6f6fa"></div><div class="a" style="left:0;top:44px;width:637px;height:390px;background:#000e80"></div><div class="a" style="left:0;top:44px;width:636px;height:389px;background:linear-gradient(90deg,#0420c8 0,#1f50d8 1px,#2a60e0 3px,#3a72e8 4px,#3a72e8 633px,#1b44c8 634px,#0a2aa8 636px)"></div><div class="a" style="left:1px;top:430px;width:635px;height:3px;background:linear-gradient(#2a5cdc,#1a40c0 2px,#0a2aa0 3px)"></div><div class="a" style="left:0;top:434px;width:640px;height:1px;background:#e4e8ee"></div><div class="a" style="left:0;top:44px;width:637px;height:29px;background:linear-gradient(#0a38c8 0,#0a38c8 1px,#3a88ff 1px,#2a7cff 3px,#0c62f4 6px,#0558ea 10px,#0456e6 16px,#0558ea 19px,#0e62f8 22px,#1268ff 24px,#0656e8 26px,#0038b8 27px,#0038b8 28px,#f4f6fc 28px,#f4f6fc 29px)"></div><div class="a" style="left:6px;top:51px;width:15px;height:15px;background:#1a1a8a"></div><svg class="a" style="left:6px;top:51px" width="15" height="15"><path d="M2 3 Q5 1 5 5 L3 10 M5 7 L7 11" stroke="#d0c0ff" stroke-width="1" fill="none"/><path d="M8 11 L13 3" stroke="#e04080" stroke-width="1.3"/><text x="6" y="14" font-size="5" fill="#c0c8ff" font-family='"Liberation Sans"'>xd</text></svg><div style="position:absolute;left:24px;top:53.64px;font:bold 12px/12px 'Liberation Sans', sans-serif;color:#fff;white-space:nowrap;transform-origin:0 0;transform:scaleX(1.0);text-shadow:1px 1px 0 #0a2a8a;">E:\middle needle WOT.log - Session 4</div><div class="a" style="left:570px;top:49px;width:19px;height:18px;border:1px solid #fff;border-radius:3px;background:radial-gradient(circle at 35% 30%,#6a9cff 0,#2f6ff6 50%,#1c54e0 100%)"></div><div class="a" style="left:575px;top:61px;width:6px;height:3px;background:#fff"></div><div class="a" style="left:591px;top:49px;width:19px;height:18px;border:1px solid #fff;border-radius:3px;background:radial-gradient(circle at 35% 30%,#6a9cff 0,#2f6ff6 50%,#1c54e0 100%)"></div><div class="a" style="left:596px;top:54px;width:9px;height:9px;border:1px solid #fff;border-top:3px solid #fff;box-sizing:border-box"></div><div class="a" style="left:612px;top:49px;width:19px;height:18px;border:1px solid #fff;border-radius:3px;background:radial-gradient(circle at 40% 35%,#f3a07a 0,#e86a3a 45%,#c9401a 100%)"></div><svg class="a" style="left:612px;top:49px" width="21" height="21"><path d="M6 6 L15 15 M15 6 L6 15" stroke="#fff" stroke-width="2.2"/></svg><div class="a" style="left:4px;top:73px;width:629px;height:357px;background:#ece9d8"></div><div style="position:absolute;left:8.1px;top:74.64px;font:normal 11px/11px 'Liberation Sans', sans-serif;color:#000;white-space:nowrap;transform-origin:0 0;transform:scaleX(0.86);-webkit-text-stroke:0.25px #000;">File</div><div style="position:absolute;left:33.9px;top:74.64px;font:normal 11px/11px 'Liberation Sans', sans-serif;color:#000;white-space:nowrap;transform-origin:0 0;transform:scaleX(0.86);-webkit-text-stroke:0.25px #000;">Edit</div><div style="position:absolute;left:61.7px;top:74.64px;font:normal 11px/11px 'Liberation Sans', sans-serif;color:#000;white-space:nowrap;transform-origin:0 0;transform:scaleX(0.86);-webkit-text-stroke:0.25px #000;">Sessions</div><div style="position:absolute;left:109.5px;top:74.64px;font:normal 11px/11px 'Liberation Sans', sans-serif;color:#000;white-space:nowrap;transform-origin:0 0;transform:scaleX(0.88);-webkit-text-stroke:0.25px #000;">Channels</div><div style="position:absolute;left:162.5px;top:74.64px;font:normal 11px/11px 'Liberation Sans', sans-serif;color:#000;white-space:nowrap;transform-origin:0 0;transform:scaleX(0.88);-webkit-text-stroke:0.25px #000;">Templates</div><div style="position:absolute;left:219.0px;top:74.64px;font:normal 11px/11px 'Liberation Sans', sans-serif;color:#000;white-space:nowrap;transform-origin:0 0;transform:scaleX(0.85);-webkit-text-stroke:0.25px #000;">Tools</div><div style="position:absolute;left:252.0px;top:74.64px;font:normal 11px/11px 'Liberation Sans', sans-serif;color:#000;white-space:nowrap;transform-origin:0 0;transform:scaleX(0.85);-webkit-text-stroke:0.25px #000;">View</div><div class="a" style="left:4px;top:90px;width:384px;height:1px;background:#aca899"></div><div class="a" style="left:4px;top:91px;width:384px;height:1px;background:#f7f6f0"></div><div class="a" style="left:4px;top:92px;width:20px;height:19px;background:#f7f6f0;border-top:1px solid #a5a294;box-sizing:border-box"></div><svg class="a" style="left:0;top:88px" width="320" height="26"><path d="M9.5 15 L12 19 L14 20.5 L19 20.5 L20.5 17 L20.5 11 Q19.5 10 18.5 11 L18.5 9 Q17.5 8 16.5 9 L16.5 8 Q15.5 7 14.5 8 L14.5 9 Q13.5 8 12.5 9 L12.5 15.5 L11 14 Q9.5 13.5 9.5 15Z" fill="#fff" stroke="#000" stroke-width="1.3"/><path d="M14.5 10 L14.5 15 M16.5 9.5 L16.5 15 M18.5 11 L18.5 15" stroke="#000" stroke-width="0.8"/><path d="M28.3 13.8 L31.6 10.2 Q34 8 39.4 8.6 L40.4 11.2 L39.8 15.8 L38.1 18.4 L36.2 19.7 L34.2 19.1 L33.5 13.8 L30.2 14.5 Z" fill="none" stroke="#fff" stroke-width="1" transform="translate(0.8,0.8)"/><path d="M28.3 13.8 L31.6 10.2 Q34 8 39.4 8.6 L40.4 11.2 L39.8 15.8 L38.1 18.4 L36.2 19.7 L34.2 19.1 L33.5 13.8 L30.2 14.5 Z M34.8 11.5 L34.8 19 M36.8 11.5 L36.8 19 M38.4 11.8 L38.4 18" fill="none" stroke="#aca899" stroke-width="0.9"/><path d="M54 8 L59 8 M56.5 8 L56.5 19 M54 19 L59 19" stroke="#333" stroke-width="1"/><circle cx="76.6" cy="11.8" r="5" fill="#eefcff" stroke="#000" stroke-width="1.6"/><path d="M80.19999999999999 15.4 L83.89999999999999 19.5" stroke="#000" stroke-width="2.2"/><path d="M73.89999999999999 11.8 L79.3 11.8" stroke="#000" stroke-width="1.8"/><path d="M76.6 9.1 L76.6 14.5" stroke="#000" stroke-width="1.8"/><circle cx="97.5" cy="11.8" r="5" fill="#eefcff" stroke="#000" stroke-width="1.6"/><path d="M101.1 15.4 L104.8 19.5" stroke="#000" stroke-width="2.2"/><path d="M94.8 11.8 L100.2 11.8" stroke="#000" stroke-width="1.8"/><path d="M114 10.5 L117 7 L122 6.5 L126 9.5 L127 13 L125 18.5 L120 20 L115 18.5 L113 14Z" fill="#fff" stroke="#000" stroke-width="1.4"/><path d="M116 11 L120 15" stroke="#000" stroke-width="1.2"/><circle cx="120.3" cy="15.2" r="1.5" fill="#000"/><path d="M120 7.5 L120 9 M123.5 8 L123 9.5 M116.5 8.5 L117.3 9.7" stroke="#000" stroke-width="0.8"/><rect x="136.5" y="7.5" width="9" height="12.5" fill="#f2ee30" stroke="#111" stroke-width="1"/><path d="M137.5 6 L137.5 8.5 M139.5 6 L139.5 8.5 M141.5 6 L141.5 8.5 M143.5 6 L143.5 8.5 M138 11 L141 11 M138 13.5 L143 13.5 M139 16 L142 16" stroke="#000" stroke-width="0.9"/><rect x="145.5" y="9" width="1" height="11" fill="#555"/><path d="M155.5 10.8 Q159 7 162 7.8 Q165 8.2 168 11.8" fill="none" stroke="#222" stroke-width="1.4"/><path d="M156.5 12 L164.5 19 M164.5 12 L156.5 19" stroke="#b87868" stroke-width="1.1"/><rect x="175" y="5" width="1" height="17" fill="#bdbaa9"/><rect x="176" y="5" width="1" height="17" fill="#fbfaf6"/><rect x="222" y="5" width="1" height="17" fill="#bdbaa9"/><rect x="223" y="5" width="1" height="17" fill="#fbfaf6"/><circle cx="189" cy="13.2" r="4.2" fill="#a7a59a"/><rect x="206" y="8" width="7" height="10" fill="#a7a59a"/><path d="M234 8 L240.5 13.2 L234 18.4Z" fill="#000"/><path d="M253 17.3 L253 12.5 L255 9 L257 9 L257.5 12 L258.5 12 L259 9 L261 9 L263.5 12.5 L263.5 17.3 L259.5 17.3 L259.5 14 L257 14 L257 17.3Z" fill="#000"/><rect x="254.2" y="14.5" width="1.6" height="2" fill="#fff"/><rect x="260.7" y="14.5" width="1.6" height="2" fill="#fff"/><path d="M274.5 7.5 L274.5 18.5 L285 18.5" fill="none" stroke="#fff" stroke-width="1" transform="translate(0.7,0.7)"/><path d="M274 7.5 L274 18.5 L285 18.5" fill="none" stroke="#aaa798" stroke-width="1.1" stroke-dasharray="1.2 0.6"/><path d="M276 16.5 L279 11 L281 14 L284.5 8.5 M276 9.5 L284 9.5 M276 12.5 L284 12.5 M276 15.2 L284 15.2" fill="none" stroke="#b5b2a3" stroke-width="0.9" stroke-dasharray="1 0.8"/><rect x="293.5" y="8.5" width="12.5" height="11" fill="#f4f3ee" stroke="#a3a195" stroke-width="1.4"/><path d="M297.7 8.5 L297.7 19.5 M301.8 8.5 L301.8 19.5 M293.5 11.2 L306 11.2 M293.5 14 L306 14 M293.5 16.8 L306 16.8" stroke="#a3a195" stroke-width="1.2"/></svg><div style="position:absolute;left:517.5px;top:97.14px;font:normal 11px/11px 'Liberation Sans', sans-serif;color:#000;white-space:nowrap;transform-origin:0 0;transform:scaleX(0.865);-webkit-text-stroke:0.25px #000;">Session length:</div><div style="position:absolute;left:589px;top:97.14px;font:normal 11px/11px 'Liberation Sans', sans-serif;color:#000;white-space:nowrap;transform-origin:0 0;transform:scaleX(0.9);-webkit-text-stroke:0.25px #000;">38.42 sec</div><div class="a" style="left:433px;top:129px;width:197px;height:1px;background:#8d8a7a"></div><div class="a" style="left:6px;top:130px;width:624px;height:2px;background:#f4f3ec"></div><div class="a" style="left:7px;top:116px;width:52px;height:13px;background:#efede3;border-top:1px solid #f5f4ec"></div><div class="a" style="left:59px;top:117px;width:1px;height:12px;background:#8d8a7a"></div><div class="a" style="left:60px;top:118px;width:1px;height:11px;background:#c5c2b2"></div><div style="position:absolute;left:12.5px;top:119.24px;font:normal 11px/11px 'Liberation Sans', sans-serif;color:#000;white-space:nowrap;transform-origin:0 0;transform:scaleX(0.86);-webkit-text-stroke:0.25px #000;">Session 1</div><div class="a" style="left:60px;top:116px;width:53px;height:13px;background:#efede3;border-top:1px solid #f5f4ec"></div><div class="a" style="left:113px;top:117px;width:1px;height:12px;background:#8d8a7a"></div><div class="a" style="left:114px;top:118px;width:1px;height:11px;background:#c5c2b2"></div><div style="position:absolute;left:66.5px;top:119.24px;font:normal 11px/11px 'Liberation Sans', sans-serif;color:#000;white-space:nowrap;transform-origin:0 0;transform:scaleX(0.86);-webkit-text-stroke:0.25px #000;">Session 2</div><div class="a" style="left:114px;top:116px;width:53px;height:13px;background:#efede3;border-top:1px solid #f5f4ec"></div><div class="a" style="left:167px;top:117px;width:1px;height:12px;background:#8d8a7a"></div><div class="a" style="left:168px;top:118px;width:1px;height:11px;background:#c5c2b2"></div><div style="position:absolute;left:119.5px;top:119.24px;font:normal 11px/11px 'Liberation Sans', sans-serif;color:#000;white-space:nowrap;transform-origin:0 0;transform:scaleX(0.86);-webkit-text-stroke:0.25px #000;">Session 3</div><div class="a" style="left:222px;top:116px;width:52px;height:13px;background:#efede3;border-top:1px solid #f5f4ec"></div><div class="a" style="left:274px;top:117px;width:1px;height:12px;background:#8d8a7a"></div><div class="a" style="left:275px;top:118px;width:1px;height:11px;background:#c5c2b2"></div><div style="position:absolute;left:226.4px;top:119.24px;font:normal 11px/11px 'Liberation Sans', sans-serif;color:#000;white-space:nowrap;transform-origin:0 0;transform:scaleX(0.86);-webkit-text-stroke:0.25px #000;">Session 5</div><div class="a" style="left:275px;top:116px;width:52px;height:13px;background:#efede3;border-top:1px solid #f5f4ec"></div><div class="a" style="left:327px;top:117px;width:1px;height:12px;background:#8d8a7a"></div><div class="a" style="left:328px;top:118px;width:1px;height:11px;background:#c5c2b2"></div><div style="position:absolute;left:279.5px;top:119.24px;font:normal 11px/11px 'Liberation Sans', sans-serif;color:#000;white-space:nowrap;transform-origin:0 0;transform:scaleX(0.86);-webkit-text-stroke:0.25px #000;">Session 6</div><div class="a" style="left:328px;top:116px;width:52px;height:13px;background:#efede3;border-top:1px solid #f5f4ec"></div><div class="a" style="left:380px;top:117px;width:1px;height:12px;background:#8d8a7a"></div><div class="a" style="left:381px;top:118px;width:1px;height:11px;background:#c5c2b2"></div><div style="position:absolute;left:333.1px;top:119.24px;font:normal 11px/11px 'Liberation Sans', sans-serif;color:#000;white-space:nowrap;transform-origin:0 0;transform:scaleX(0.86);-webkit-text-stroke:0.25px #000;">Session 7</div><div class="a" style="left:381px;top:116px;width:52px;height:13px;background:#efede3;border-top:1px solid #f5f4ec"></div><div class="a" style="left:433px;top:117px;width:1px;height:12px;background:#8d8a7a"></div><div class="a" style="left:434px;top:118px;width:1px;height:11px;background:#c5c2b2"></div><div style="position:absolute;left:385.9px;top:119.24px;font:normal 11px/11px 'Liberation Sans', sans-serif;color:#000;white-space:nowrap;transform-origin:0 0;transform:scaleX(0.86);-webkit-text-stroke:0.25px #000;">Session 8</div><div class="a" style="left:167px;top:114px;width:54px;height:17px;background:#f1efe6;border-top:1px solid #fbfaf6;border-left:1px solid #f8f7f2"></div><div class="a" style="left:221px;top:115px;width:1px;height:16px;background:#8d8a7a"></div><div style="position:absolute;left:173px;top:117.45px;font:normal 11px/11px 'Liberation Sans', sans-serif;color:#000;white-space:nowrap;transform-origin:0 0;transform:scaleX(0.86);-webkit-text-stroke:0.25px #000;">Session 4</div><div class="a" style="left:6px;top:132.6px;width:624px;height:1.4px;background:#5e5c52"></div><div class="a" style="left:6px;top:133px;width:1px;height:296px;background:#716f64"></div><svg width="640" height="480" style="position:absolute;left:0;top:0"><rect x="7" y="134" width="608" height="280" fill="#ffffff"/><g stroke="#ededed" stroke-width="1" shape-rendering="crispEdges"><line x1="33" y1="374.5" x2="559" y2="374.5"/><line x1="33" y1="357.5" x2="559" y2="357.5"/><line x1="33" y1="340.5" x2="559" y2="340.5"/><line x1="33" y1="324.5" x2="559" y2="324.5"/><line x1="33" y1="307.5" x2="559" y2="307.5"/><line x1="33" y1="290.5" x2="559" y2="290.5"/><line x1="33" y1="274.5" x2="559" y2="274.5"/><line x1="33" y1="257.5" x2="559" y2="257.5"/><line x1="33" y1="241.5" x2="559" y2="241.5"/><line x1="33" y1="224.5" x2="559" y2="224.5"/><line x1="33" y1="207.5" x2="559" y2="207.5"/><line x1="33" y1="191.5" x2="559" y2="191.5"/><line x1="33" y1="174.5" x2="559" y2="174.5"/><line x1="33" y1="158.5" x2="559" y2="158.5"/><line x1="33" y1="141.5" x2="559" y2="141.5"/><line x1="61.5" y1="134" x2="61.5" y2="383"/><line x1="89.5" y1="134" x2="89.5" y2="383"/><line x1="117.5" y1="134" x2="117.5" y2="383"/><line x1="145.5" y1="134" x2="145.5" y2="383"/><line x1="173.5" y1="134" x2="173.5" y2="383"/><line x1="201.5" y1="134" x2="201.5" y2="383"/><line x1="229.5" y1="134" x2="229.5" y2="383"/><line x1="257.5" y1="134" x2="257.5" y2="383"/><line x1="285.5" y1="134" x2="285.5" y2="383"/><line x1="313.5" y1="134" x2="313.5" y2="383"/><line x1="341.5" y1="134" x2="341.5" y2="383"/><line x1="369.5" y1="134" x2="369.5" y2="383"/><line x1="397.5" y1="134" x2="397.5" y2="383"/><line x1="425.5" y1="134" x2="425.5" y2="383"/><line x1="453.5" y1="134" x2="453.5" y2="383"/><line x1="481.5" y1="134" x2="481.5" y2="383"/><line x1="509.5" y1="134" x2="509.5" y2="383"/><line x1="537.5" y1="134" x2="537.5" y2="383"/></g><polyline points="33.20,245.80 34.00,250.00 35.50,253.30 37.20,254.60 38.40,252.10 39.70,254.60 41.30,256.25 44.25,255.00 46.75,256.70 49.70,257.50 53.00,257.90 55.90,257.50 58.40,260.80 61.30,262.50 63.80,262.90 66.30,261.70 67.60,257.50 68.30,256.00 69.40,237.20 70.50,236.40 71.75,246.60 74.10,252.80 78.00,258.30 80.00,234.80 81.90,243.40 83.50,252.00 84.25,243.40 87.40,251.25 90.50,256.70 95.20,259.80 99.90,257.50 103.00,254.40 106.90,256.70 110.80,258.30 113.90,256.25 118.60,253.00 123.30,258.30 126.70,247.50 130.00,255.80 135.00,256.30 140.00,258.00 145.00,260.00 148.30,258.70 152.50,260.00 155.00,255.00 157.50,257.50 160.80,255.00 164.20,260.80 168.30,254.20 170.00,257.50 172.50,257.50 175.80,260.80 177.50,259.20 178.70,243.30 180.80,250.00 184.20,253.30 188.30,255.00 191.70,257.50 195.80,255.80 201.70,260.30 207.50,264.20 210.80,261.70 215.00,268.30 218.30,276.70 220.00,286.70 221.70,298.30 223.30,308.30 225.00,304.20 226.70,307.50 228.30,316.70 229.20,328.30 230.80,323.30 232.50,326.70 233.30,331.70 235.00,321.70 236.70,323.30 237.50,320.00 239.20,325.00 240.80,334.20 242.50,326.70 245.80,313.30 247.50,316.70 248.70,310.00 250.00,321.70 250.80,337.50 252.50,321.70 254.20,325.80 255.80,324.20 256.70,327.50 259.20,300.80 260.80,313.30 262.50,318.30 264.20,333.30 265.80,323.30 268.30,305.80 270.00,304.20 271.70,318.30 273.30,295.80 275.00,308.30 276.30,328.30 278.30,326.70 280.00,327.50 281.70,309.20 283.30,318.30 284.60,328.75 285.80,304.80 286.60,240.00 287.60,150.00 288.30,135.50 303.50,135.50 305.30,140.00 306.30,326.70 307.70,339.20 309.30,335.00 311.00,328.30 312.70,315.00 314.30,301.70 315.70,299.20 316.30,285.80 317.30,300.00 318.00,310.00 319.30,300.00 320.70,305.00 322.70,299.20 323.50,291.70 324.20,266.25 325.40,240.00 326.00,150.00 326.50,135.50 341.00,135.50 342.50,140.00 343.50,293.75 344.40,310.00 345.00,344.40 347.70,337.00 349.80,320.40 351.90,308.75 353.10,301.25 354.40,305.00 355.60,293.75 356.25,281.25 357.50,273.75 358.75,275.60 360.00,270.60 361.25,276.25 363.10,270.60 365.00,278.75 366.50,288.10 368.10,280.00 370.60,274.40 373.10,281.90 375.60,285.00 378.75,286.90 380.00,283.75 381.00,276.90 381.50,258.10 383.00,200.00 384.30,150.00 385.00,135.00 465.00,135.00" fill="none" stroke="#9634b0" stroke-width="1.05" stroke-linejoin="round"/><rect x="31" y="134" width="1.4" height="280" fill="#1a1a1a"/><rect x="31" y="383" width="528" height="1.8" fill="#222"/><rect x="558.8" y="134" width="1.5" height="280" fill="#222"/><line x1="28" y1="373.5" x2="31" y2="373.5" stroke="#222" stroke-width="1"/><line x1="28" y1="340.3" x2="31" y2="340.3" stroke="#222" stroke-width="1"/><line x1="28" y1="307.1" x2="31" y2="307.1" stroke="#222" stroke-width="1"/><line x1="28" y1="273.9" x2="31" y2="273.9" stroke="#222" stroke-width="1"/><line x1="28" y1="240.7" x2="31" y2="240.7" stroke="#222" stroke-width="1"/><line x1="28" y1="207.4" x2="31" y2="207.4" stroke="#222" stroke-width="1"/><line x1="28" y1="174.2" x2="31" y2="174.2" stroke="#222" stroke-width="1"/><line x1="28" y1="141.0" x2="31" y2="141.0" stroke="#222" stroke-width="1"/><text transform="translate(29.2,373.54) rotate(-90)" text-anchor="middle" font-family='"Liberation Sans"' font-size="9.3" fill="#8e2ea2" stroke="#8e2ea2" stroke-width="0.3">8</text><text transform="translate(29.2,340.32) rotate(-90)" text-anchor="middle" font-family='"Liberation Sans"' font-size="9.3" fill="#8e2ea2" stroke="#8e2ea2" stroke-width="0.3">10</text><text transform="translate(29.2,307.10) rotate(-90)" text-anchor="middle" font-family='"Liberation Sans"' font-size="9.3" fill="#8e2ea2" stroke="#8e2ea2" stroke-width="0.3">12</text><text transform="translate(29.2,273.88) rotate(-90)" text-anchor="middle" font-family='"Liberation Sans"' font-size="9.3" fill="#8e2ea2" stroke="#8e2ea2" stroke-width="0.3">14</text><text transform="translate(29.2,240.66) rotate(-90)" text-anchor="middle" font-family='"Liberation Sans"' font-size="9.3" fill="#8e2ea2" stroke="#8e2ea2" stroke-width="0.3">16</text><text transform="translate(29.2,207.44) rotate(-90)" text-anchor="middle" font-family='"Liberation Sans"' font-size="9.3" fill="#8e2ea2" stroke="#8e2ea2" stroke-width="0.3">18</text><text transform="translate(29.2,174.22) rotate(-90)" text-anchor="middle" font-family='"Liberation Sans"' font-size="9.3" fill="#8e2ea2" stroke="#8e2ea2" stroke-width="0.3">20</text><text transform="translate(29.2,141.00) rotate(-90)" text-anchor="middle" font-family='"Liberation Sans"' font-size="9.3" fill="#8e2ea2" stroke="#8e2ea2" stroke-width="0.3">22</text><text transform="translate(18.3,343.3) rotate(-90)" text-anchor="middle" font-family='"Liberation Sans"' font-size="10" textLength="68" lengthAdjust="spacingAndGlyphs" fill="#9a3ab0">LC_1_O2 (AFR)</text><clipPath id="xl"><rect x="33" y="384" width="526" height="20"/></clipPath><g clip-path="url(#xl)"><text x="33.30" y="393.5" text-anchor="middle" font-family='"Liberation Sans"' font-size="11" fill="#000">0</text><text x="89.35" y="393.5" text-anchor="middle" font-family='"Liberation Sans"' font-size="11" fill="#000">5</text><text x="145.40" y="393.5" text-anchor="middle" font-family='"Liberation Sans"' font-size="11" fill="#000">10</text><text x="201.45" y="393.5" text-anchor="middle" font-family='"Liberation Sans"' font-size="11" fill="#000">15</text><text x="257.50" y="393.5" text-anchor="middle" font-family='"Liberation Sans"' font-size="11" fill="#000">20</text><text x="313.55" y="393.5" text-anchor="middle" font-family='"Liberation Sans"' font-size="11" fill="#000">25</text><text x="369.60" y="393.5" text-anchor="middle" font-family='"Liberation Sans"' font-size="11" fill="#000">30</text><text x="425.65" y="393.5" text-anchor="middle" font-family='"Liberation Sans"' font-size="11" fill="#000">35</text><text x="481.70" y="393.5" text-anchor="middle" font-family='"Liberation Sans"' font-size="11" fill="#000">40</text><text x="537.75" y="393.5" text-anchor="middle" font-family='"Liberation Sans"' font-size="11" fill="#000">45</text></g><text x="564" y="143.2" font-family='"Liberation Sans"' font-weight="bold" font-size="9.2" fill="#222">0.16 sec</text><rect x="561" y="144.5" width="53" height="1.4" fill="#222"/><text x="564" y="155.3" font-family='"Liberation Sans"' font-size="9.4" fill="#9a3ab0">15.26 AFR</text></svg><div class="a" style="left:32px;top:414px;width:527px;height:15px;background:linear-gradient(#fdfdfb,#f5f4ee 70%,#f0efe8)"></div><div class="a" style="left:7px;top:414px;width:25px;height:15px;background:#ffffff"></div><div class="a" style="left:33px;top:416px;width:16px;height:12px;background:#ebe9df;border:1px solid #f8f7f2;box-sizing:border-box;border-radius:2px"></div><svg class="a" style="left:0;top:0" width="640" height="480"><path d="M42.5 419.0 L39.5 422.0 L42.5 425.0" fill="none" stroke="#c9c7ba" stroke-width="1.6"/></svg><div class="a" style="left:543px;top:416px;width:14px;height:12px;background:#ebe9df;border:1px solid #f8f7f2;box-sizing:border-box;border-radius:2px"></div><svg class="a" style="left:0;top:0" width="640" height="480"><path d="M548.5 419.0 L551.5 422.0 L548.5 425.0" fill="none" stroke="#c9c7ba" stroke-width="1.6"/></svg><div class="a" style="left:560px;top:414px;width:55px;height:15px;background:#f3f2ec"></div><div class="a" style="left:562px;top:416px;width:12px;height:11px;background:linear-gradient(#c6d6fc,#b4c8f7);border:1px solid #e0e8fe;box-sizing:border-box;border-radius:2px"></div><svg class="a" style="left:0;top:0" width="640" height="480"><path d="M569.5 418.0 L566.0 421.5 L569.5 425.0" fill="none" stroke="#4d6185" stroke-width="2"/></svg><div class="a" style="left:577px;top:416px;width:20px;height:11px;background:linear-gradient(#c6d6fc,#b4c8f7);border:1px solid #e0e8fe;box-sizing:border-box;border-radius:2px"></div><svg class="a" style="left:0;top:0" width="640" height="480"><path d="M584.5 419.0 L584.5 424.0 M586.5 419.0 L586.5 424.0 M588.5 419.0 L588.5 424.0" fill="none" stroke="#eef3fe" stroke-width="1"/></svg><div class="a" style="left:600px;top:416px;width:13px;height:11px;background:linear-gradient(#c6d6fc,#b4c8f7);border:1px solid #e0e8fe;box-sizing:border-box;border-radius:2px"></div><svg class="a" style="left:0;top:0" width="640" height="480"><path d="M605.0 418.0 L608.5 421.5 L605.0 425.0" fill="none" stroke="#4d6185" stroke-width="2"/></svg><div class="a" style="left:615px;top:134px;width:13px;height:280px;background:linear-gradient(90deg,#f3f2ea,#fdfdfa)"></div><div class="a" style="left:615px;top:135px;width:13px;height:13px;background:#ebe9df;border:1px solid #f8f7f2;box-sizing:border-box;border-radius:2px"></div><svg class="a" style="left:0;top:0" width="640" height="480"><path d="M618.5 143.0 L621.5 140.0 L624.5 143.0" fill="none" stroke="#c9c7ba" stroke-width="1.6"/></svg><div class="a" style="left:615px;top:400px;width:13px;height:13px;background:#ebe9df;border:1px solid #f8f7f2;box-sizing:border-box;border-radius:2px"></div><svg class="a" style="left:0;top:0" width="640" height="480"><path d="M618.5 405.0 L621.5 408.0 L624.5 405.0" fill="none" stroke="#c9c7ba" stroke-width="1.6"/></svg><div class="a" style="left:4px;top:429px;width:629px;height:1px;background:#f8f8f4"></div></body></html>
